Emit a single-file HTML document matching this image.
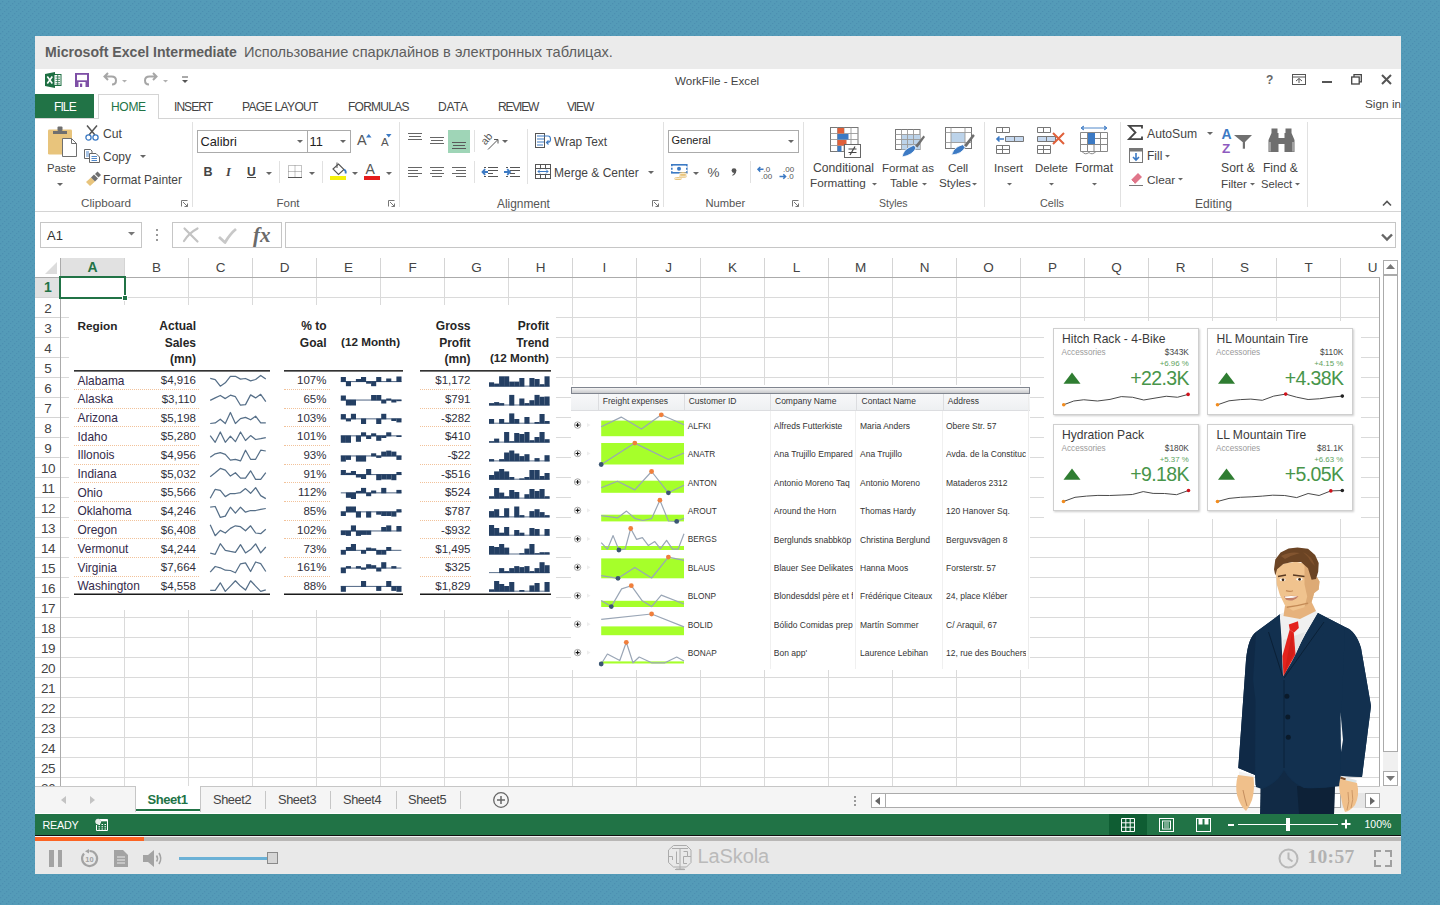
<!DOCTYPE html>
<html><head><meta charset="utf-8">
<style>
*{margin:0;padding:0;box-sizing:border-box}
html,body{width:1440px;height:905px;overflow:hidden}
body{font-family:"Liberation Sans", sans-serif;position:relative;background:#549bb8;}
.a{position:absolute}
.t{position:absolute;white-space:nowrap;line-height:1}
svg.a{overflow:visible}
</style></head><body>

<svg class="a" style="left:0;top:0" width="1440" height="905"><defs><pattern id="bgp" width="6" height="6" patternUnits="userSpaceOnUse"><rect x="4" y="5" width="1.3" height="1.3" fill="#4c8fb1"/><rect x="2" y="1" width="1.3" height="1.3" fill="#4c8fb1"/><rect x="0" y="3" width="1.3" height="1.3" fill="#4c8fb1"/></pattern></defs><rect width="1440" height="905" fill="url(#bgp)"/></svg>
<div class="a" style="left:35px;top:36px;width:1366px;height:838px;background:#fff;"></div>
<div class="a" style="left:35px;top:36px;width:1366px;height:33px;background:#ebebeb;"></div>
<div class="t" style="top:45px;font-size:14.1px;color:#5e5e5e;font-weight:bold;left:45px;">Microsoft Excel Intermediate</div>
<div class="t" style="top:45px;font-size:14.6px;color:#5e5e5e;left:244px;">Использование спарклайнов в электронных таблицах.</div>
<svg class="a" style="left:45px;top:72px;" width="17" height="16" viewBox="0 0 17 16"><path d="M0 2L10 0V16L0 14Z" fill="#1d6f42"/><rect x="9" y="2.5" width="7" height="11" fill="#fff" stroke="#1d6f42" stroke-width="1"/>
<path d="M10.5 5H15M10.5 7.3H15M10.5 9.6H15M10.5 11.9H15M12.7 3V13" stroke="#1d6f42" stroke-width="0.8"/>
<path d="M2.3 4.5L7.3 11.5M7.3 4.5L2.3 11.5" stroke="#fff" stroke-width="1.6"/></svg>
<svg class="a" style="left:75px;top:73px;" width="14" height="14" viewBox="0 0 14 14"><rect x="0" y="0" width="14" height="14" fill="#7e4fa6"/><rect x="2" y="1.8" width="10" height="5.5" fill="#fff"/><rect x="3.5" y="9" width="7" height="5" fill="#fff"/><rect x="5" y="10.5" width="2.2" height="3.5" fill="#7e4fa6"/></svg>
<svg class="a" style="left:103px;top:72px;" width="15" height="14" viewBox="0 0 15 14"><path d="M5 1L1.5 4.5L5 8M2 4.5H8.5Q13 4.5 13 8.5Q13 12.5 9 12.5" fill="none" stroke="#a6a6a6" stroke-width="2"/></svg>
<svg class="a" style="left:121.5px;top:80px;" width="5.0" height="3.5" viewBox="0 0 5.0 3.5"><path d="M0 0H5.0L2.5 2.5Z" fill="#b0b0b0"/></svg>
<svg class="a" style="left:143px;top:72px;" width="15" height="14" viewBox="0 0 15 14"><path d="M10 1L13.5 4.5L10 8M13 4.5H6.5Q2 4.5 2 8.5Q2 12.5 6 12.5" fill="none" stroke="#a6a6a6" stroke-width="2"/></svg>
<svg class="a" style="left:162.5px;top:80px;" width="5.0" height="3.5" viewBox="0 0 5.0 3.5"><path d="M0 0H5.0L2.5 2.5Z" fill="#b0b0b0"/></svg>
<svg class="a" style="left:181px;top:76px;" width="8" height="8" viewBox="0 0 8 8"><path d="M1 1H7" stroke="#555" stroke-width="1"/><path d="M1 4H7L4 7Z" fill="#555"/></svg>
<div class="t" style="top:75px;font-size:11.6px;color:#444;left:675px;">WorkFile - Excel</div>
<div class="t" style="top:74px;font-size:12px;color:#666;font-weight:bold;left:1266px;">?</div>
<svg class="a" style="left:1292px;top:74px;" width="14" height="11" viewBox="0 0 14 11"><rect x="0.5" y="0.5" width="13" height="10" fill="none" stroke="#555"/><path d="M0.5 3H13.5" stroke="#555"/><path d="M4 7L7 4.5L10 7M7 4.5V9" fill="none" stroke="#555"/></svg>
<div class="a" style="left:1322px;top:81px;width:10px;height:2px;background:#555;"></div>
<svg class="a" style="left:1351px;top:74px;" width="11" height="11" viewBox="0 0 11 11"><rect x="0.7" y="3" width="7.5" height="7" fill="#fff" stroke="#444" stroke-width="1.3"/><path d="M3 3V0.7H10.3V7.8H8.2" fill="none" stroke="#444" stroke-width="1.3"/></svg>
<svg class="a" style="left:1381px;top:74px;" width="11" height="11" viewBox="0 0 11 11"><path d="M1 1L10 10M10 1L1 10" stroke="#555" stroke-width="2"/></svg>
<div class="a" style="left:35px;top:94px;width:59px;height:25px;background:#217346;"></div>
<div class="t" style="top:101px;font-size:12px;color:#fff;left:54px;letter-spacing:-0.9px;">FILE</div>
<div class="a" style="left:98px;top:94px;width:61px;height:25px;background:#fff;border:1px solid #d4d4d4;border-bottom:none;"></div>
<div class="t" style="top:101px;font-size:12px;color:#217346;left:111px;letter-spacing:-0.3px;">HOME</div>
<div class="t" style="top:101px;font-size:12px;color:#444;left:174px;letter-spacing:-0.95px;">INSERT</div>
<div class="t" style="top:101px;font-size:12px;color:#444;left:242px;letter-spacing:-0.65px;">PAGE LAYOUT</div>
<div class="t" style="top:101px;font-size:12px;color:#444;left:348px;letter-spacing:-0.75px;">FORMULAS</div>
<div class="t" style="top:101px;font-size:12px;color:#444;left:438px;letter-spacing:-0.1px;">DATA</div>
<div class="t" style="top:101px;font-size:12px;color:#444;left:498px;letter-spacing:-1.2px;">REVIEW</div>
<div class="t" style="top:101px;font-size:12px;color:#444;left:567px;letter-spacing:-1.15px;">VIEW</div>
<div class="t" style="top:99px;font-size:11.8px;color:#444;left:1365px;">Sign in</div>
<div class="a" style="left:35px;top:118px;width:63px;height:1px;background:#d4d4d4;"></div>
<div class="a" style="left:159px;top:118px;width:1242px;height:1px;background:#d4d4d4;"></div>
<div class="a" style="left:35px;top:211px;width:1366px;height:1px;background:#d4d4d4;"></div>
<div class="a" style="left:192px;top:122px;width:1px;height:85px;background:#e1e1e1;"></div>
<div class="a" style="left:399px;top:122px;width:1px;height:85px;background:#e1e1e1;"></div>
<div class="a" style="left:663px;top:122px;width:1px;height:85px;background:#e1e1e1;"></div>
<div class="a" style="left:803px;top:122px;width:1px;height:85px;background:#e1e1e1;"></div>
<div class="a" style="left:984px;top:122px;width:1px;height:85px;background:#e1e1e1;"></div>
<div class="a" style="left:1120px;top:122px;width:1px;height:85px;background:#e1e1e1;"></div>
<div class="a" style="left:1307px;top:122px;width:1px;height:85px;background:#e1e1e1;"></div>
<div class="a" style="left:279px;top:161px;width:1px;height:22px;background:#e1e1e1;"></div>
<div class="a" style="left:322px;top:161px;width:1px;height:22px;background:#e1e1e1;"></div>
<div class="a" style="left:474px;top:130px;width:1px;height:22px;background:#e1e1e1;"></div>
<div class="a" style="left:474px;top:161px;width:1px;height:22px;background:#e1e1e1;"></div>
<div class="a" style="left:527px;top:129px;width:1px;height:55px;background:#e1e1e1;"></div>
<div class="a" style="left:750px;top:161px;width:1px;height:22px;background:#e1e1e1;"></div>
<div class="t" style="top:197px;font-size:11.7px;color:#555;left:81px;">Clipboard</div>
<div class="t" style="top:198px;font-size:11.5px;color:#555;left:276.5px;">Font</div>
<div class="t" style="top:199px;font-size:11.9px;color:#555;left:497px;">Alignment</div>
<div class="t" style="top:198px;font-size:11.2px;color:#555;left:705.5px;">Number</div>
<div class="t" style="top:198px;font-size:10.5px;color:#555;left:879px;">Styles</div>
<div class="t" style="top:198px;font-size:10.8px;color:#555;left:1040px;">Cells</div>
<div class="t" style="top:198px;font-size:12.1px;color:#555;left:1195px;">Editing</div>
<svg class="a" style="left:181px;top:200px;" width="7" height="7" viewBox="0 0 7 7"><path d="M0.5 6.5V0.5H6.5" fill="none" stroke="#777"/><path d="M2 2L6.5 6.5M3.5 6.5H6.5V3.5" fill="none" stroke="#777"/></svg>
<svg class="a" style="left:388px;top:200px;" width="7" height="7" viewBox="0 0 7 7"><path d="M0.5 6.5V0.5H6.5" fill="none" stroke="#777"/><path d="M2 2L6.5 6.5M3.5 6.5H6.5V3.5" fill="none" stroke="#777"/></svg>
<svg class="a" style="left:652px;top:200px;" width="7" height="7" viewBox="0 0 7 7"><path d="M0.5 6.5V0.5H6.5" fill="none" stroke="#777"/><path d="M2 2L6.5 6.5M3.5 6.5H6.5V3.5" fill="none" stroke="#777"/></svg>
<svg class="a" style="left:792px;top:200px;" width="7" height="7" viewBox="0 0 7 7"><path d="M0.5 6.5V0.5H6.5" fill="none" stroke="#777"/><path d="M2 2L6.5 6.5M3.5 6.5H6.5V3.5" fill="none" stroke="#777"/></svg>
<svg class="a" style="left:1382px;top:200px;" width="10" height="6" viewBox="0 0 10 6"><path d="M1 5.5L5 1.5L9 5.5" fill="none" stroke="#555" stroke-width="1.6"/></svg>
<svg class="a" style="left:47px;top:126px;" width="31" height="32" viewBox="0 0 31 32"><rect x="1" y="3.5" width="24" height="25" rx="1.2" fill="#e8c47c"/>
<path d="M6 5H20V8H6Z" fill="#6f6f6f"/><rect x="10.5" y="0.5" width="5" height="4.5" rx="1" fill="#6f6f6f"/>
<path d="M15.5 12.5H24.5L29.5 17.5V30.5H15.5Z" fill="#fff" stroke="#6f6f6f"/><path d="M24.5 12.5V17.5H29.5" fill="none" stroke="#6f6f6f"/></svg>
<div class="t" style="top:163px;font-size:11.3px;color:#444;left:47px;">Paste</div>
<svg class="a" style="left:56.5px;top:183px;" width="6" height="4" viewBox="0 0 6 4"><path d="M0 0H6L3 3Z" fill="#666"/></svg>
<svg class="a" style="left:85px;top:125px;" width="15" height="16" viewBox="0 0 15 16"><path d="M2 0.5L10 10M12 0.5L4 10" stroke="#555" stroke-width="1.5"/><circle cx="3.5" cy="12.5" r="2.6" fill="none" stroke="#3c7ac4" stroke-width="1.3"/><circle cx="10.5" cy="12.5" r="2.6" fill="none" stroke="#3c7ac4" stroke-width="1.3"/></svg>
<div class="t" style="top:128px;font-size:12.2px;color:#444;left:103px;">Cut</div>
<svg class="a" style="left:84px;top:149px;" width="16" height="14" viewBox="0 0 16 14"><path d="M0.5 0.5H6.5L8 2V9.5H0.5Z" fill="#fff" stroke="#666"/><path d="M5.5 4.5H12L15.5 8V13.5H5.5Z" fill="#fff" stroke="#666"/><path d="M2 3H5M2 5H5M2 7H5M7.5 7.5H13M7.5 9.5H13M7.5 11.5H13" stroke="#3c7ac4" stroke-width="0.9"/></svg>
<div class="t" style="top:151px;font-size:12px;color:#444;left:103px;">Copy</div>
<svg class="a" style="left:140px;top:155px;" width="6" height="4" viewBox="0 0 6 4"><path d="M0 0H6L3 3Z" fill="#666"/></svg>
<svg class="a" style="left:85px;top:171px;" width="16" height="16" viewBox="0 0 16 16"><path d="M1 11L6 6.5L10 10.5L5 15Z" fill="#e8c47c"/><path d="M6 6.5L9 3.5L13 7.5L10 10.5Z" fill="#6f6f6f"/><path d="M10 3L12.5 0.5L16 4L13.5 6.5Z" fill="#6f6f6f"/></svg>
<div class="t" style="top:175px;font-size:11.95px;color:#444;left:103px;">Format Painter</div>
<div class="a" style="left:197px;top:130px;width:111px;height:23px;background:#fff;border:1px solid #ababab;"></div>
<div class="a" style="left:307px;top:130px;width:44px;height:23px;background:#fff;border:1px solid #ababab;"></div>
<div class="t" style="top:136px;font-size:12.8px;color:#222;left:200.5px;">Calibri</div>
<div class="t" style="top:136px;font-size:12.8px;color:#222;left:309.5px;">11</div>
<svg class="a" style="left:297px;top:140px;" width="6" height="4" viewBox="0 0 6 4"><path d="M0 0H6L3 3Z" fill="#666"/></svg>
<svg class="a" style="left:340px;top:140px;" width="6" height="4" viewBox="0 0 6 4"><path d="M0 0H6L3 3Z" fill="#666"/></svg>
<div class="t" style="top:133px;font-size:14.5px;color:#555;left:357px;">A</div>
<svg class="a" style="left:366px;top:134px;" width="6" height="4" viewBox="0 0 6 4"><path d="M0 3.5H5.5L2.75 0Z" fill="#3c7ac4"/></svg>
<div class="t" style="top:137px;font-size:11.5px;color:#555;left:381px;">A</div>
<svg class="a" style="left:386px;top:134px;" width="6" height="4" viewBox="0 0 6 4"><path d="M0 0H5.5L2.75 3.5Z" fill="#3c7ac4"/></svg>
<div class="t" style="top:166px;font-size:12.5px;color:#444;font-weight:bold;left:203.5px;">B</div>
<div class="t" style="top:166px;font-size:12.5px;color:#444;font-weight:bold;left:226px;font-family:'Liberation Serif',serif;"><i>I</i></div>
<div class="t" style="top:166px;font-size:12px;color:#444;font-weight:bold;left:247px;">U</div>
<div class="a" style="left:247px;top:176.5px;width:9px;height:1.2px;background:#444;"></div>
<svg class="a" style="left:265.5px;top:171.5px;" width="6" height="4" viewBox="0 0 6 4"><path d="M0 0H6L3 3Z" fill="#666"/></svg>
<svg class="a" style="left:288px;top:165px;" width="14" height="13" viewBox="0 0 14 13"><path d="M0.5 0.5H13.5V12.5H0.5ZM7 0.5V12.5M0.5 6.5H13.5" fill="none" stroke="#888" stroke-dasharray="1 1"/><path d="M0 12.5H14" stroke="#555"/></svg>
<svg class="a" style="left:308.5px;top:171.5px;" width="6" height="4" viewBox="0 0 6 4"><path d="M0 0H6L3 3Z" fill="#666"/></svg>
<svg class="a" style="left:330px;top:162px;" width="17" height="18" viewBox="0 0 17 18"><path d="M3 7L8.5 2L14 7.5L8.5 12.5Z" fill="#fff" stroke="#555" stroke-width="1.1"/><path d="M7 0.5V6" stroke="#555"/><path d="M14 7.5Q16.5 9 15.5 11.5" fill="none" stroke="#3c7ac4" stroke-width="1.8"/><rect x="0" y="14" width="16" height="4" fill="#f5f10a"/></svg>
<svg class="a" style="left:351.5px;top:171.5px;" width="6" height="4" viewBox="0 0 6 4"><path d="M0 0H6L3 3Z" fill="#666"/></svg>
<div class="t" style="top:162px;font-size:14px;color:#555;left:365.5px;">A</div>
<div class="a" style="left:364px;top:176px;width:16px;height:4px;background:#e51c1c;"></div>
<svg class="a" style="left:385.5px;top:171.5px;" width="6" height="4" viewBox="0 0 6 4"><path d="M0 0H6L3 3Z" fill="#666"/></svg>
<div class="a" style="left:408px;top:133px;width:14px;height:1px;background:#666;"></div>
<div class="a" style="left:409px;top:136px;width:12px;height:1px;background:#666;"></div>
<div class="a" style="left:408px;top:139px;width:14px;height:1px;background:#666;"></div>
<div class="a" style="left:430px;top:137px;width:14px;height:1px;background:#666;"></div>
<div class="a" style="left:431px;top:140px;width:12px;height:1px;background:#666;"></div>
<div class="a" style="left:430px;top:143px;width:14px;height:1px;background:#666;"></div>
<div class="a" style="left:448px;top:130px;width:22px;height:23px;background:#9fd5b7;"></div>
<div class="a" style="left:452px;top:142px;width:14px;height:1px;background:#5a5a5a;"></div>
<div class="a" style="left:453px;top:145px;width:12px;height:1px;background:#5a5a5a;"></div>
<div class="a" style="left:452px;top:148px;width:14px;height:1px;background:#5a5a5a;"></div>
<div class="a" style="left:408px;top:167px;width:14px;height:1px;background:#666;"></div>
<div class="a" style="left:430px;top:167px;width:14px;height:1px;background:#666;"></div>
<div class="a" style="left:452px;top:167px;width:14px;height:1px;background:#666;"></div>
<div class="a" style="left:408px;top:170px;width:10px;height:1px;background:#666;"></div>
<div class="a" style="left:432px;top:170px;width:10px;height:1px;background:#666;"></div>
<div class="a" style="left:456px;top:170px;width:10px;height:1px;background:#666;"></div>
<div class="a" style="left:408px;top:173px;width:14px;height:1px;background:#666;"></div>
<div class="a" style="left:430px;top:173px;width:14px;height:1px;background:#666;"></div>
<div class="a" style="left:452px;top:173px;width:14px;height:1px;background:#666;"></div>
<div class="a" style="left:408px;top:176px;width:10px;height:1px;background:#666;"></div>
<div class="a" style="left:432px;top:176px;width:10px;height:1px;background:#666;"></div>
<div class="a" style="left:456px;top:176px;width:10px;height:1px;background:#666;"></div>
<svg class="a" style="left:482px;top:132px;" width="18" height="18" viewBox="0 0 18 18"><text x="0" y="0" font-size="10.5" fill="#555" transform="translate(3.5 13.5) rotate(-50)" font-family="Liberation Sans">ab</text><path d="M6 17.5L15.5 8M12 7.5H16V11.5" fill="none" stroke="#555" stroke-width="1"/></svg>
<svg class="a" style="left:501.5px;top:140px;" width="6" height="4" viewBox="0 0 6 4"><path d="M0 0H6L3 3Z" fill="#666"/></svg>
<svg class="a" style="left:482px;top:166px;" width="18" height="12" viewBox="0 0 18 12"><path d="M2 1.5H4M6 1.5H16M6 4.5H16M6 7.5H11M2 10.5H4M6 10.5H16" stroke="#555" stroke-width="1"/><path d="M0.5 6H6M3.2 3.2L0.5 6L3.2 8.8" fill="none" stroke="#3c7ac4" stroke-width="1.8"/></svg>
<svg class="a" style="left:504px;top:166px;" width="18" height="12" viewBox="0 0 18 12"><path d="M2 1.5H4M6 1.5H16M6 4.5H16M6 7.5H11M2 10.5H4M6 10.5H16" stroke="#555" stroke-width="1"/><path d="M0 6H6M3.2 3.2L6 6L3.2 8.8" fill="none" stroke="#3c7ac4" stroke-width="1.8"/></svg>
<svg class="a" style="left:535px;top:133px;" width="16" height="15" viewBox="0 0 16 15"><rect x="0.5" y="0.5" width="9" height="14" fill="none" stroke="#555"/><path d="M2 3H13M2 6H9M2 9H9M2 12H8" stroke="#3c7ac4" stroke-width="1"/><path d="M13 3Q15.5 3 15.5 6.5Q15.5 9.5 12 9.5M13.5 7.5L11.5 9.5L13.5 11.5" fill="none" stroke="#3c7ac4" stroke-width="1.2"/></svg>
<div class="t" style="top:137px;font-size:11.9px;color:#444;left:554px;">Wrap Text</div>
<svg class="a" style="left:535px;top:164px;" width="16" height="15" viewBox="0 0 16 15"><rect x="0.5" y="0.5" width="15" height="14" fill="none" stroke="#555"/><path d="M0.5 4.5H15.5M0.5 10.5H15.5M5.5 0.5V4.5M10.5 0.5V4.5M5.5 10.5V14.5M10.5 10.5V14.5" stroke="#555"/><path d="M3 7.5H13M5 5.5L3 7.5L5 9.5M11 5.5L13 7.5L11 9.5" fill="none" stroke="#3c7ac4"/></svg>
<div class="t" style="top:167px;font-size:12px;color:#444;left:554px;">Merge &amp; Center</div>
<svg class="a" style="left:648px;top:171px;" width="6" height="4" viewBox="0 0 6 4"><path d="M0 0H6L3 3Z" fill="#666"/></svg>
<div class="a" style="left:668px;top:130px;width:131px;height:23px;background:#fff;border:1px solid #ababab;"></div>
<div class="t" style="top:135px;font-size:11px;color:#222;left:671.5px;">General</div>
<svg class="a" style="left:788px;top:140px;" width="6" height="4" viewBox="0 0 6 4"><path d="M0 0H6L3 3Z" fill="#666"/></svg>
<svg class="a" style="left:671px;top:164px;" width="18" height="17" viewBox="0 0 18 17"><rect x="0.8" y="0.8" width="15" height="8" fill="#fff" stroke="#3c7ac4" stroke-width="1.6"/><path d="M0 3H2.5M14 3H16.5M0 6.5H2.5M14 6.5H16.5" stroke="#fff" stroke-width="1.4"/><circle cx="8" cy="4.8" r="2" fill="#3c7ac4"/><ellipse cx="12" cy="9.5" rx="3.8" ry="1.5" fill="#e8c47c"/><ellipse cx="12" cy="12.3" rx="3.8" ry="1.5" fill="#e8c47c"/><ellipse cx="7" cy="14.5" rx="3.8" ry="1.6" fill="#e8c47c"/><path d="M8.5 9.5H15.5M8.5 12.3H15.5M3.5 14.5H10.5" stroke="#fff" stroke-width="0.6"/></svg>
<svg class="a" style="left:692.5px;top:171.5px;" width="6" height="4" viewBox="0 0 6 4"><path d="M0 0H6L3 3Z" fill="#666"/></svg>
<div class="t" style="top:166px;font-size:13.5px;color:#555;left:707.5px;">%</div>
<svg class="a" style="left:731px;top:168px;" width="6" height="8" viewBox="0 0 6 8"><circle cx="3" cy="2.6" r="2.4" fill="#555"/><path d="M5.2 2.8Q5.2 6.5 1.5 7.8L1.2 7Q3 6 3.2 4.5Z" fill="#555"/></svg>
<svg class="a" style="left:757px;top:165px;" width="16" height="15" viewBox="0 0 16 15"><text x="6.5" y="7" font-size="8" fill="#555" font-family="Liberation Sans">.0</text><text x="4" y="14" font-size="8" fill="#555" font-family="Liberation Sans">.00</text><path d="M1 4.3H6.5M3.3 2L1 4.3L3.3 6.6" fill="none" stroke="#3c7ac4" stroke-width="1.5"/></svg>
<svg class="a" style="left:779px;top:165px;" width="16" height="15" viewBox="0 0 16 15"><text x="4" y="7" font-size="8" fill="#555" font-family="Liberation Sans">.00</text><text x="8" y="14" font-size="8" fill="#555" font-family="Liberation Sans">.0</text><path d="M0.5 11.5H6.5M4.3 9.2L6.6 11.5L4.3 13.8" fill="none" stroke="#3c7ac4" stroke-width="1.5"/></svg>
<svg class="a" style="left:829px;top:126px;" width="33" height="33" viewBox="0 0 33 33"><rect x="1.5" y="1.5" width="27.5" height="24" fill="#fff" stroke="#777"/>
<path d="M8.5 1.5V25.5M15 1.5V25.5M22 1.5V25.5M1.5 7.5H29M1.5 13.5H29M1.5 19.5H29" stroke="#999" stroke-width="0.9"/>
<rect x="8.5" y="2" width="6.5" height="5.5" fill="#e0603a"/><rect x="8.5" y="8" width="11" height="5.5" fill="#3c7ac4"/><rect x="8.5" y="14" width="9" height="5.5" fill="#e0603a"/><rect x="8.5" y="20" width="4" height="5.5" fill="#3c7ac4"/>
<rect x="15.5" y="18.5" width="16" height="13" fill="#fff" stroke="#666"/><path d="M19.5 23H27.5M19.5 26.5H27.5M26 20.5L21 29" stroke="#444" stroke-width="1.2"/></svg>
<div class="t" style="top:162px;font-size:12.2px;color:#444;left:813px;">Conditional</div>
<div class="t" style="top:177px;font-size:11.7px;color:#444;left:810px;">Formatting</div>
<svg class="a" style="left:871.5px;top:183px;" width="5.0" height="3.5" viewBox="0 0 5.0 3.5"><path d="M0 0H5.0L2.5 2.5Z" fill="#666"/></svg>
<svg class="a" style="left:894px;top:128px;" width="32" height="30" viewBox="0 0 32 30"><rect x="1.5" y="1.5" width="24.5" height="20" fill="#fff" stroke="#777"/>
<rect x="7.5" y="7" width="18.5" height="14.5" fill="#bcd3ea"/>
<path d="M7.5 1.5V21.5M13.5 1.5V21.5M19.5 1.5V21.5M1.5 6.5H26M1.5 11.5H26M1.5 16.5H26" stroke="#999" stroke-width="0.9"/>
<path d="M21 18L29.5 7.5L31 9L23.5 19.5Z" fill="#6f6f6f"/><path d="M8 29Q9.5 22 15 19.5L20 17L22 20Q19 27 8 29Z" fill="#3c7ac4" stroke="#fff" stroke-width="0.8"/></svg>
<div class="t" style="top:163px;font-size:11.55px;color:#444;left:882px;">Format as</div>
<div class="t" style="top:177px;font-size:11.7px;color:#444;left:890px;">Table</div>
<svg class="a" style="left:921.5px;top:183px;" width="5.0" height="3.5" viewBox="0 0 5.0 3.5"><path d="M0 0H5.0L2.5 2.5Z" fill="#666"/></svg>
<svg class="a" style="left:944px;top:126px;" width="32" height="31" viewBox="0 0 32 31"><rect x="1.5" y="1.5" width="26" height="21" fill="#fff" stroke="#777"/>
<rect x="7" y="7" width="14" height="9.5" fill="#bcd3ea"/>
<path d="M7 1.5V22.5M21 1.5V22.5M1.5 6.5H27.5M1.5 16.5H27.5" stroke="#999" stroke-width="0.9"/>
<path d="M20 19.5L29 8L30.8 9.8L22.5 21Z" fill="#6f6f6f"/><path d="M7.5 29Q9 23 14 20.5L19 18.5L21 21.5Q18 28 7.5 29Z" fill="#3c7ac4" stroke="#fff" stroke-width="0.8"/></svg>
<div class="t" style="top:162px;font-size:11.7px;color:#444;left:948px;">Cell</div>
<div class="t" style="top:177px;font-size:11.7px;color:#444;left:939px;">Styles</div>
<svg class="a" style="left:971.5px;top:183px;" width="5.0" height="3.5" viewBox="0 0 5.0 3.5"><path d="M0 0H5.0L2.5 2.5Z" fill="#666"/></svg>
<svg class="a" style="left:996px;top:127px;" width="28" height="27" viewBox="0 0 28 27"><path d="M0.5 0.5H13.5V5.5H0.5ZM6.5 0.5V5.5" fill="none" stroke="#777"/>
<path d="M9.5 9.5H27.5V14.5H9.5ZM18.5 9.5V14.5" fill="#c6d9f0" stroke="#777"/>
<path d="M1 12H8M3.5 9.5L1 12L3.5 14.5" fill="none" stroke="#3c7ac4" stroke-width="1.6"/>
<path d="M0.5 18.5H13.5V26.5H0.5ZM0.5 22.5H13.5M6.5 18.5V26.5" fill="none" stroke="#777"/></svg>
<div class="t" style="top:162px;font-size:11.6px;color:#444;left:994px;">Insert</div>
<svg class="a" style="left:1006.5px;top:183px;" width="5.0" height="3.5" viewBox="0 0 5.0 3.5"><path d="M0 0H5.0L2.5 2.5Z" fill="#666"/></svg>
<svg class="a" style="left:1037px;top:127px;" width="31" height="27" viewBox="0 0 31 27"><path d="M0.5 0.5H13.5V5.5H0.5ZM6.5 0.5V5.5" fill="none" stroke="#777"/>
<path d="M0.5 9.5H18.5V14.5H0.5ZM9.5 9.5V14.5" fill="#c6d9f0" stroke="#777"/>
<path d="M16 6L27 17M27 6L16 17" stroke="#e0603a" stroke-width="2"/>
<path d="M0.5 18.5H13.5V26.5H0.5ZM0.5 22.5H13.5M6.5 18.5V26.5" fill="none" stroke="#777"/></svg>
<div class="t" style="top:163px;font-size:11.4px;color:#444;left:1035px;">Delete</div>
<svg class="a" style="left:1048.5px;top:183px;" width="5.0" height="3.5" viewBox="0 0 5.0 3.5"><path d="M0 0H5.0L2.5 2.5Z" fill="#666"/></svg>
<svg class="a" style="left:1080px;top:126px;" width="29" height="30" viewBox="0 0 29 30"><path d="M1 2H27M3 0V4M25 0V4M1 2L4 0M1 2L4 4M27 2L24 0M27 2L24 4" fill="none" stroke="#3c7ac4" stroke-width="0.9"/>
<path d="M0.5 6.5H27.5V25.5H0.5ZM0.5 12.5H27.5M0.5 18.5H27.5M7.5 6.5V25.5M14 6.5V25.5M20.5 6.5V25.5" fill="none" stroke="#888"/>
<rect x="8" y="7" width="7" height="11" fill="#3c7ac4"/><path d="M2 25.5Q5 29.5 9 26.5Q12 29.5 16 25.5" fill="none" stroke="#888"/></svg>
<div class="t" style="top:162px;font-size:12px;color:#444;left:1075px;">Format</div>
<svg class="a" style="left:1091.5px;top:183px;" width="5.0" height="3.5" viewBox="0 0 5.0 3.5"><path d="M0 0H5.0L2.5 2.5Z" fill="#666"/></svg>
<svg class="a" style="left:1128px;top:125px;" width="15" height="15" viewBox="0 0 15 15"><path d="M14 3.5V0.8H1L7.5 7.5L1 14.2H14V11.5" fill="none" stroke="#444" stroke-width="1.8"/></svg>
<div class="t" style="top:128px;font-size:12.2px;color:#444;left:1147px;">AutoSum</div>
<svg class="a" style="left:1206.5px;top:132px;" width="6" height="4" viewBox="0 0 6 4"><path d="M0 0H6L3 3Z" fill="#666"/></svg>
<svg class="a" style="left:1129px;top:148px;" width="14" height="15" viewBox="0 0 14 15"><rect x="0.5" y="0.5" width="13" height="14" fill="#fff" stroke="#777"/><rect x="0.5" y="0.5" width="13" height="3" fill="#777"/><path d="M7 5V12M4 9L7 12L10 9" fill="none" stroke="#3c7ac4" stroke-width="1.6"/></svg>
<div class="t" style="top:150px;font-size:12px;color:#444;left:1147px;">Fill</div>
<svg class="a" style="left:1165.0px;top:155px;" width="5.0" height="3.5" viewBox="0 0 5.0 3.5"><path d="M0 0H5.0L2.5 2.5Z" fill="#666"/></svg>
<svg class="a" style="left:1129px;top:171px;" width="15" height="15" viewBox="0 0 15 15"><path d="M2 9L9 2L13 6L6 13Z" fill="#e0768a"/><path d="M2 9L5.5 12.5" stroke="#fff"/><path d="M0 14.5H14" stroke="#777"/></svg>
<div class="t" style="top:175px;font-size:11.8px;color:#444;left:1147px;">Clear</div>
<svg class="a" style="left:1177.5px;top:178px;" width="5.0" height="3.5" viewBox="0 0 5.0 3.5"><path d="M0 0H5.0L2.5 2.5Z" fill="#666"/></svg>
<svg class="a" style="left:1222px;top:127px;" width="31" height="27" viewBox="0 0 31 27"><text x="-0.5" y="11.5" font-size="14" font-weight="bold" fill="#3c7ac4" font-family="Liberation Sans">A</text>
<text x="0" y="26" font-size="13.5" font-weight="bold" fill="#8e5bbf" font-family="Liberation Sans">Z</text>
<path d="M12 8H30L23 15V22H20.5V15Z" fill="#707070"/><path d="M20.5 15V22H23" fill="none" stroke="#fff" stroke-width="0.6"/></svg>
<svg class="a" style="left:1268px;top:128px;" width="27" height="25" viewBox="0 0 27 25"><path d="M3.5 0.5H9.5V5H10.5V24H0.5V12L3.5 5Z" fill="#6f6f6f"/><path d="M17.5 0.5H23.5V5L26.5 12V24H16.5V5H17.5Z" fill="#6f6f6f"/><rect x="10" y="10" width="7" height="6" fill="#6f6f6f"/>
<path d="M2 14V23.5M25 14V23.5" stroke="#fff" stroke-width="0.7"/></svg>
<div class="t" style="top:162px;font-size:12.2px;color:#444;left:1221px;">Sort &amp;</div>
<div class="t" style="top:178px;font-size:11.7px;color:#444;left:1221px;">Filter</div>
<svg class="a" style="left:1250.0px;top:183px;" width="5.0" height="3.5" viewBox="0 0 5.0 3.5"><path d="M0 0H5.0L2.5 2.5Z" fill="#666"/></svg>
<div class="t" style="top:162px;font-size:12px;color:#444;left:1263px;">Find &amp;</div>
<div class="t" style="top:179px;font-size:11.2px;color:#444;left:1261px;">Select</div>
<svg class="a" style="left:1294.5px;top:183px;" width="5.0" height="3.5" viewBox="0 0 5.0 3.5"><path d="M0 0H5.0L2.5 2.5Z" fill="#666"/></svg>
<div class="a" style="left:40px;top:222px;width:102px;height:26px;background:#fff;border:1px solid #c6c6c6;"></div>
<div class="t" style="top:229px;font-size:13px;color:#333;left:47px;">A1</div>
<svg class="a" style="left:127.5px;top:232px;" width="7.0" height="4.5" viewBox="0 0 7.0 4.5"><path d="M0 0H7.0L3.5 3.5Z" fill="#777"/></svg>
<div class="a" style="left:156px;top:229px;width:2px;height:2px;background:#999;"></div>
<div class="a" style="left:156px;top:234px;width:2px;height:2px;background:#999;"></div>
<div class="a" style="left:156px;top:239px;width:2px;height:2px;background:#999;"></div>
<div class="a" style="left:172px;top:222px;width:110px;height:26px;background:#fff;border:1px solid #c6c6c6;"></div>
<svg class="a" style="left:182px;top:227px;" width="18" height="16" viewBox="0 0 18 16"><path d="M2 14Q7 6 15.5 1.5M2.5 1.5Q9 8 15.5 14.5" fill="none" stroke="#c3c3c3" stroke-width="2.2" stroke-linecap="round"/></svg>
<svg class="a" style="left:218px;top:228px;" width="19" height="16" viewBox="0 0 19 16"><path d="M1 9L7 14.5Q12 6 18 1" fill="none" stroke="#c8c8c8" stroke-width="2.8" stroke-linejoin="round"/></svg>
<div class="t" style="top:225px;font-size:21px;color:#6a6a6a;font-weight:bold;left:253px;font-family:'Liberation Serif',serif;font-style:italic;">fx</div>
<div class="a" style="left:285px;top:222px;width:1111px;height:26px;background:#fff;border:1px solid #c6c6c6;"></div>
<svg class="a" style="left:1381px;top:233px;" width="12" height="8" viewBox="0 0 12 8"><path d="M1 1.5L6 6.5L11 1.5" fill="none" stroke="#666" stroke-width="2.4"/></svg>
<div class="a" style="left:35px;top:249px;width:1366px;height:537px;background:#fff;"></div>
<div class="a" style="left:61px;top:258px;width:64px;height:19px;background:#e1e1e1;"></div>
<div class="a" style="left:35px;top:277px;width:25px;height:21px;background:#e1e1e1;"></div>
<svg class="a" style="left:45px;top:262px;" width="12" height="12" viewBox="0 0 12 12"><path d="M12 0V12H0Z" fill="#dcdcdc"/></svg>
<div class="a" style="left:124px;top:258px;width:1px;height:19px;background:#d4d4d4;"></div>
<div class="a" style="left:188px;top:258px;width:1px;height:19px;background:#d4d4d4;"></div>
<div class="a" style="left:252px;top:258px;width:1px;height:19px;background:#d4d4d4;"></div>
<div class="a" style="left:316px;top:258px;width:1px;height:19px;background:#d4d4d4;"></div>
<div class="a" style="left:380px;top:258px;width:1px;height:19px;background:#d4d4d4;"></div>
<div class="a" style="left:444px;top:258px;width:1px;height:19px;background:#d4d4d4;"></div>
<div class="a" style="left:508px;top:258px;width:1px;height:19px;background:#d4d4d4;"></div>
<div class="a" style="left:572px;top:258px;width:1px;height:19px;background:#d4d4d4;"></div>
<div class="a" style="left:636px;top:258px;width:1px;height:19px;background:#d4d4d4;"></div>
<div class="a" style="left:700px;top:258px;width:1px;height:19px;background:#d4d4d4;"></div>
<div class="a" style="left:764px;top:258px;width:1px;height:19px;background:#d4d4d4;"></div>
<div class="a" style="left:828px;top:258px;width:1px;height:19px;background:#d4d4d4;"></div>
<div class="a" style="left:892px;top:258px;width:1px;height:19px;background:#d4d4d4;"></div>
<div class="a" style="left:956px;top:258px;width:1px;height:19px;background:#d4d4d4;"></div>
<div class="a" style="left:1020px;top:258px;width:1px;height:19px;background:#d4d4d4;"></div>
<div class="a" style="left:1084px;top:258px;width:1px;height:19px;background:#d4d4d4;"></div>
<div class="a" style="left:1148px;top:258px;width:1px;height:19px;background:#d4d4d4;"></div>
<div class="a" style="left:1212px;top:258px;width:1px;height:19px;background:#d4d4d4;"></div>
<div class="a" style="left:1276px;top:258px;width:1px;height:19px;background:#d4d4d4;"></div>
<div class="a" style="left:1340px;top:258px;width:1px;height:19px;background:#d4d4d4;"></div>
<div class="a" style="left:60px;top:258px;width:1px;height:528px;background:#ababab;"></div>
<div class="a" style="left:35px;top:277px;width:1345px;height:1px;background:#ababab;"></div>
<div class="t" style="top:260px;font-size:14px;color:#217346;font-weight:bold;left:92.5px;transform:translateX(-50%);">A</div>
<div class="t" style="top:261px;font-size:13.5px;color:#444;left:156.5px;transform:translateX(-50%);">B</div>
<div class="t" style="top:261px;font-size:13.5px;color:#444;left:220.5px;transform:translateX(-50%);">C</div>
<div class="t" style="top:261px;font-size:13.5px;color:#444;left:284.5px;transform:translateX(-50%);">D</div>
<div class="t" style="top:261px;font-size:13.5px;color:#444;left:348.5px;transform:translateX(-50%);">E</div>
<div class="t" style="top:261px;font-size:13.5px;color:#444;left:412.5px;transform:translateX(-50%);">F</div>
<div class="t" style="top:261px;font-size:13.5px;color:#444;left:476.5px;transform:translateX(-50%);">G</div>
<div class="t" style="top:261px;font-size:13.5px;color:#444;left:540.5px;transform:translateX(-50%);">H</div>
<div class="t" style="top:261px;font-size:13.5px;color:#444;left:604.5px;transform:translateX(-50%);">I</div>
<div class="t" style="top:261px;font-size:13.5px;color:#444;left:668.5px;transform:translateX(-50%);">J</div>
<div class="t" style="top:261px;font-size:13.5px;color:#444;left:732.5px;transform:translateX(-50%);">K</div>
<div class="t" style="top:261px;font-size:13.5px;color:#444;left:796.5px;transform:translateX(-50%);">L</div>
<div class="t" style="top:261px;font-size:13.5px;color:#444;left:860.5px;transform:translateX(-50%);">M</div>
<div class="t" style="top:261px;font-size:13.5px;color:#444;left:924.5px;transform:translateX(-50%);">N</div>
<div class="t" style="top:261px;font-size:13.5px;color:#444;left:988.5px;transform:translateX(-50%);">O</div>
<div class="t" style="top:261px;font-size:13.5px;color:#444;left:1052.5px;transform:translateX(-50%);">P</div>
<div class="t" style="top:261px;font-size:13.5px;color:#444;left:1116.5px;transform:translateX(-50%);">Q</div>
<div class="t" style="top:261px;font-size:13.5px;color:#444;left:1180.5px;transform:translateX(-50%);">R</div>
<div class="t" style="top:261px;font-size:13.5px;color:#444;left:1244.5px;transform:translateX(-50%);">S</div>
<div class="t" style="top:261px;font-size:13.5px;color:#444;left:1308.5px;transform:translateX(-50%);">T</div>
<div class="t" style="top:261px;font-size:13.5px;color:#444;left:1372.5px;transform:translateX(-50%);">U</div>
<div class="a" style="left:35px;top:297px;width:25px;height:1px;background:#d4d4d4;"></div>
<div class="a" style="left:61px;top:297px;width:1318px;height:1px;background:#dadada;"></div>
<div class="t" style="top:280px;font-size:14px;color:#217346;font-weight:bold;left:48px;transform:translateX(-50%);">1</div>
<div class="a" style="left:35px;top:317px;width:25px;height:1px;background:#d4d4d4;"></div>
<div class="a" style="left:61px;top:317px;width:1318px;height:1px;background:#dadada;"></div>
<div class="t" style="top:302px;font-size:13.5px;color:#444;left:48px;transform:translateX(-50%);">2</div>
<div class="a" style="left:35px;top:337px;width:25px;height:1px;background:#d4d4d4;"></div>
<div class="a" style="left:61px;top:337px;width:1318px;height:1px;background:#dadada;"></div>
<div class="t" style="top:322px;font-size:13.5px;color:#444;left:48px;transform:translateX(-50%);">3</div>
<div class="a" style="left:35px;top:357px;width:25px;height:1px;background:#d4d4d4;"></div>
<div class="a" style="left:61px;top:357px;width:1318px;height:1px;background:#dadada;"></div>
<div class="t" style="top:342px;font-size:13.5px;color:#444;left:48px;transform:translateX(-50%);">4</div>
<div class="a" style="left:35px;top:377px;width:25px;height:1px;background:#d4d4d4;"></div>
<div class="a" style="left:61px;top:377px;width:1318px;height:1px;background:#dadada;"></div>
<div class="t" style="top:362px;font-size:13.5px;color:#444;left:48px;transform:translateX(-50%);">5</div>
<div class="a" style="left:35px;top:397px;width:25px;height:1px;background:#d4d4d4;"></div>
<div class="a" style="left:61px;top:397px;width:1318px;height:1px;background:#dadada;"></div>
<div class="t" style="top:382px;font-size:13.5px;color:#444;left:48px;transform:translateX(-50%);">6</div>
<div class="a" style="left:35px;top:417px;width:25px;height:1px;background:#d4d4d4;"></div>
<div class="a" style="left:61px;top:417px;width:1318px;height:1px;background:#dadada;"></div>
<div class="t" style="top:402px;font-size:13.5px;color:#444;left:48px;transform:translateX(-50%);">7</div>
<div class="a" style="left:35px;top:437px;width:25px;height:1px;background:#d4d4d4;"></div>
<div class="a" style="left:61px;top:437px;width:1318px;height:1px;background:#dadada;"></div>
<div class="t" style="top:422px;font-size:13.5px;color:#444;left:48px;transform:translateX(-50%);">8</div>
<div class="a" style="left:35px;top:457px;width:25px;height:1px;background:#d4d4d4;"></div>
<div class="a" style="left:61px;top:457px;width:1318px;height:1px;background:#dadada;"></div>
<div class="t" style="top:442px;font-size:13.5px;color:#444;left:48px;transform:translateX(-50%);">9</div>
<div class="a" style="left:35px;top:477px;width:25px;height:1px;background:#d4d4d4;"></div>
<div class="a" style="left:61px;top:477px;width:1318px;height:1px;background:#dadada;"></div>
<div class="t" style="top:462px;font-size:13.5px;color:#444;left:48px;transform:translateX(-50%);letter-spacing:-0.6px;">10</div>
<div class="a" style="left:35px;top:497px;width:25px;height:1px;background:#d4d4d4;"></div>
<div class="a" style="left:61px;top:497px;width:1318px;height:1px;background:#dadada;"></div>
<div class="t" style="top:482px;font-size:13.5px;color:#444;left:48px;transform:translateX(-50%);letter-spacing:-0.6px;">11</div>
<div class="a" style="left:35px;top:517px;width:25px;height:1px;background:#d4d4d4;"></div>
<div class="a" style="left:61px;top:517px;width:1318px;height:1px;background:#dadada;"></div>
<div class="t" style="top:502px;font-size:13.5px;color:#444;left:48px;transform:translateX(-50%);letter-spacing:-0.6px;">12</div>
<div class="a" style="left:35px;top:537px;width:25px;height:1px;background:#d4d4d4;"></div>
<div class="a" style="left:61px;top:537px;width:1318px;height:1px;background:#dadada;"></div>
<div class="t" style="top:522px;font-size:13.5px;color:#444;left:48px;transform:translateX(-50%);letter-spacing:-0.6px;">13</div>
<div class="a" style="left:35px;top:557px;width:25px;height:1px;background:#d4d4d4;"></div>
<div class="a" style="left:61px;top:557px;width:1318px;height:1px;background:#dadada;"></div>
<div class="t" style="top:542px;font-size:13.5px;color:#444;left:48px;transform:translateX(-50%);letter-spacing:-0.6px;">14</div>
<div class="a" style="left:35px;top:577px;width:25px;height:1px;background:#d4d4d4;"></div>
<div class="a" style="left:61px;top:577px;width:1318px;height:1px;background:#dadada;"></div>
<div class="t" style="top:562px;font-size:13.5px;color:#444;left:48px;transform:translateX(-50%);letter-spacing:-0.6px;">15</div>
<div class="a" style="left:35px;top:597px;width:25px;height:1px;background:#d4d4d4;"></div>
<div class="a" style="left:61px;top:597px;width:1318px;height:1px;background:#dadada;"></div>
<div class="t" style="top:582px;font-size:13.5px;color:#444;left:48px;transform:translateX(-50%);letter-spacing:-0.6px;">16</div>
<div class="a" style="left:35px;top:617px;width:25px;height:1px;background:#d4d4d4;"></div>
<div class="a" style="left:61px;top:617px;width:1318px;height:1px;background:#dadada;"></div>
<div class="t" style="top:602px;font-size:13.5px;color:#444;left:48px;transform:translateX(-50%);letter-spacing:-0.6px;">17</div>
<div class="a" style="left:35px;top:637px;width:25px;height:1px;background:#d4d4d4;"></div>
<div class="a" style="left:61px;top:637px;width:1318px;height:1px;background:#dadada;"></div>
<div class="t" style="top:622px;font-size:13.5px;color:#444;left:48px;transform:translateX(-50%);letter-spacing:-0.6px;">18</div>
<div class="a" style="left:35px;top:657px;width:25px;height:1px;background:#d4d4d4;"></div>
<div class="a" style="left:61px;top:657px;width:1318px;height:1px;background:#dadada;"></div>
<div class="t" style="top:642px;font-size:13.5px;color:#444;left:48px;transform:translateX(-50%);letter-spacing:-0.6px;">19</div>
<div class="a" style="left:35px;top:677px;width:25px;height:1px;background:#d4d4d4;"></div>
<div class="a" style="left:61px;top:677px;width:1318px;height:1px;background:#dadada;"></div>
<div class="t" style="top:662px;font-size:13.5px;color:#444;left:48px;transform:translateX(-50%);letter-spacing:-0.6px;">20</div>
<div class="a" style="left:35px;top:697px;width:25px;height:1px;background:#d4d4d4;"></div>
<div class="a" style="left:61px;top:697px;width:1318px;height:1px;background:#dadada;"></div>
<div class="t" style="top:682px;font-size:13.5px;color:#444;left:48px;transform:translateX(-50%);letter-spacing:-0.6px;">21</div>
<div class="a" style="left:35px;top:717px;width:25px;height:1px;background:#d4d4d4;"></div>
<div class="a" style="left:61px;top:717px;width:1318px;height:1px;background:#dadada;"></div>
<div class="t" style="top:702px;font-size:13.5px;color:#444;left:48px;transform:translateX(-50%);letter-spacing:-0.6px;">22</div>
<div class="a" style="left:35px;top:737px;width:25px;height:1px;background:#d4d4d4;"></div>
<div class="a" style="left:61px;top:737px;width:1318px;height:1px;background:#dadada;"></div>
<div class="t" style="top:722px;font-size:13.5px;color:#444;left:48px;transform:translateX(-50%);letter-spacing:-0.6px;">23</div>
<div class="a" style="left:35px;top:757px;width:25px;height:1px;background:#d4d4d4;"></div>
<div class="a" style="left:61px;top:757px;width:1318px;height:1px;background:#dadada;"></div>
<div class="t" style="top:742px;font-size:13.5px;color:#444;left:48px;transform:translateX(-50%);letter-spacing:-0.6px;">24</div>
<div class="a" style="left:35px;top:777px;width:25px;height:1px;background:#d4d4d4;"></div>
<div class="a" style="left:61px;top:777px;width:1318px;height:1px;background:#dadada;"></div>
<div class="t" style="top:762px;font-size:13.5px;color:#444;left:48px;transform:translateX(-50%);letter-spacing:-0.6px;">25</div>
<div class="a" style="left:35px;top:797px;width:25px;height:1px;background:#d4d4d4;"></div>
<div class="a" style="left:61px;top:797px;width:1318px;height:1px;background:#dadada;"></div>
<div class="t" style="top:782px;font-size:13.5px;color:#444;left:48px;transform:translateX(-50%);letter-spacing:-0.6px;">26</div>
<div class="a" style="left:124px;top:278px;width:1px;height:508px;background:#dadada;"></div>
<div class="a" style="left:188px;top:278px;width:1px;height:508px;background:#dadada;"></div>
<div class="a" style="left:252px;top:278px;width:1px;height:508px;background:#dadada;"></div>
<div class="a" style="left:316px;top:278px;width:1px;height:508px;background:#dadada;"></div>
<div class="a" style="left:380px;top:278px;width:1px;height:508px;background:#dadada;"></div>
<div class="a" style="left:444px;top:278px;width:1px;height:508px;background:#dadada;"></div>
<div class="a" style="left:508px;top:278px;width:1px;height:508px;background:#dadada;"></div>
<div class="a" style="left:572px;top:278px;width:1px;height:508px;background:#dadada;"></div>
<div class="a" style="left:636px;top:278px;width:1px;height:508px;background:#dadada;"></div>
<div class="a" style="left:700px;top:278px;width:1px;height:508px;background:#dadada;"></div>
<div class="a" style="left:764px;top:278px;width:1px;height:508px;background:#dadada;"></div>
<div class="a" style="left:828px;top:278px;width:1px;height:508px;background:#dadada;"></div>
<div class="a" style="left:892px;top:278px;width:1px;height:508px;background:#dadada;"></div>
<div class="a" style="left:956px;top:278px;width:1px;height:508px;background:#dadada;"></div>
<div class="a" style="left:1020px;top:278px;width:1px;height:508px;background:#dadada;"></div>
<div class="a" style="left:1084px;top:278px;width:1px;height:508px;background:#dadada;"></div>
<div class="a" style="left:1148px;top:278px;width:1px;height:508px;background:#dadada;"></div>
<div class="a" style="left:1212px;top:278px;width:1px;height:508px;background:#dadada;"></div>
<div class="a" style="left:1276px;top:278px;width:1px;height:508px;background:#dadada;"></div>
<div class="a" style="left:1340px;top:278px;width:1px;height:508px;background:#dadada;"></div>
<div class="a" style="left:1379px;top:277px;width:1px;height:509px;background:#ababab;"></div>
<div class="a" style="left:59px;top:276px;width:67px;height:23px;background:transparent;border:2px solid #217346;"></div>
<div class="a" style="left:121.5px;top:294.5px;width:6px;height:6px;background:#217346;border:1px solid #fff;"></div>
<div class="a" style="left:1381px;top:249px;width:20px;height:537px;background:#fff;"></div>
<div class="a" style="left:1383px;top:260px;width:15px;height:15px;background:#fff;border:1px solid #ababab;"></div>
<svg class="a" style="left:1386px;top:264px;" width="9" height="5" viewBox="0 0 9 5"><path d="M0 5H9L4.5 0Z" fill="#777"/></svg>
<div class="a" style="left:1383px;top:275px;width:15px;height:477px;background:#fff;border:1px solid #ababab;"></div>
<div class="a" style="left:1383px;top:752px;width:15px;height:20px;background:#f0f0f0;"></div>
<div class="a" style="left:1383px;top:771px;width:15px;height:15px;background:#fff;border:1px solid #ababab;"></div>
<svg class="a" style="left:1386px;top:776px;" width="9" height="5" viewBox="0 0 9 5"><path d="M0 0H9L4.5 5Z" fill="#777"/></svg>
<div class="a" style="left:69px;top:305px;width:487px;height:305px;background:#fff;"></div>
<div class="t" style="top:321px;font-size:11.8px;color:#262626;font-weight:bold;left:77.5px;">Region</div>
<div class="t" style="top:320px;font-size:12px;color:#262626;font-weight:bold;right:1244px;">Actual</div>
<div class="t" style="top:337px;font-size:12px;color:#262626;font-weight:bold;right:1244px;">Sales</div>
<div class="t" style="top:353px;font-size:12px;color:#262626;font-weight:bold;right:1244px;">(mn)</div>
<div class="t" style="top:320px;font-size:12px;color:#262626;font-weight:bold;right:1113.5px;">% to</div>
<div class="t" style="top:337px;font-size:12px;color:#262626;font-weight:bold;right:1113.5px;">Goal</div>
<div class="t" style="top:336px;font-size:11.7px;color:#262626;font-weight:bold;left:341px;">(12 Month)</div>
<div class="t" style="top:320px;font-size:12px;color:#262626;font-weight:bold;right:969.5px;">Gross</div>
<div class="t" style="top:337px;font-size:12px;color:#262626;font-weight:bold;right:969.5px;">Profit</div>
<div class="t" style="top:353px;font-size:12px;color:#262626;font-weight:bold;right:969.5px;">(mn)</div>
<div class="t" style="top:320px;font-size:12px;color:#262626;font-weight:bold;right:891px;">Profit</div>
<div class="t" style="top:337px;font-size:12px;color:#262626;font-weight:bold;right:891px;">Trend</div>
<div class="t" style="top:352px;font-size:11.7px;color:#262626;font-weight:bold;right:891px;">(12 Month)</div>
<div class="a" style="left:74px;top:370px;width:196px;height:1px;background:#333;"></div>
<div class="a" style="left:74px;top:371px;width:196px;height:1px;background:#777;"></div>
<div class="a" style="left:74px;top:594px;width:196px;height:1px;background:#1a1a1a;"></div>
<div class="a" style="left:74px;top:593px;width:196px;height:1px;background:#8a8a8a;"></div>
<div class="a" style="left:284px;top:370px;width:119px;height:1px;background:#333;"></div>
<div class="a" style="left:284px;top:371px;width:119px;height:1px;background:#777;"></div>
<div class="a" style="left:284px;top:594px;width:119px;height:1px;background:#1a1a1a;"></div>
<div class="a" style="left:284px;top:593px;width:119px;height:1px;background:#8a8a8a;"></div>
<div class="a" style="left:420px;top:370px;width:131px;height:1px;background:#333;"></div>
<div class="a" style="left:420px;top:371px;width:131px;height:1px;background:#777;"></div>
<div class="a" style="left:420px;top:594px;width:131px;height:1px;background:#1a1a1a;"></div>
<div class="a" style="left:420px;top:593px;width:131px;height:1px;background:#8a8a8a;"></div>
<div class="a" style="left:74px;top:388.8px;width:125px;height:1px;background:transparent;border-top:1px dotted #f2c29a;"></div>
<div class="a" style="left:284px;top:388.8px;width:46px;height:1px;background:transparent;border-top:1px dotted #f2c29a;"></div>
<div class="a" style="left:420px;top:388.8px;width:51px;height:1px;background:transparent;border-top:1px dotted #f2c29a;"></div>
<div class="t" style="top:376px;font-size:11.9px;color:#33294a;left:77.5px;">Alabama</div>
<div class="t" style="top:375px;font-size:11.5px;color:#2e2e3a;right:1244px;">$4,916</div>
<div class="t" style="top:375px;font-size:11.5px;color:#2e2e3a;right:1113.5px;">107%</div>
<div class="t" style="top:375px;font-size:11.5px;color:#2e2e3a;right:969.5px;">$1,172</div>
<div class="a" style="left:74px;top:407.5px;width:125px;height:1px;background:transparent;border-top:1px dotted #f2c29a;"></div>
<div class="a" style="left:284px;top:407.5px;width:46px;height:1px;background:transparent;border-top:1px dotted #f2c29a;"></div>
<div class="a" style="left:420px;top:407.5px;width:51px;height:1px;background:transparent;border-top:1px dotted #f2c29a;"></div>
<div class="t" style="top:394px;font-size:11.9px;color:#33294a;left:77.5px;">Alaska</div>
<div class="t" style="top:394px;font-size:11.5px;color:#2e2e3a;right:1244px;">$3,110</div>
<div class="t" style="top:394px;font-size:11.5px;color:#2e2e3a;right:1113.5px;">65%</div>
<div class="t" style="top:394px;font-size:11.5px;color:#2e2e3a;right:969.5px;">$791</div>
<div class="a" style="left:74px;top:426.2px;width:125px;height:1px;background:transparent;border-top:1px dotted #f2c29a;"></div>
<div class="a" style="left:284px;top:426.2px;width:46px;height:1px;background:transparent;border-top:1px dotted #f2c29a;"></div>
<div class="a" style="left:420px;top:426.2px;width:51px;height:1px;background:transparent;border-top:1px dotted #f2c29a;"></div>
<div class="t" style="top:413px;font-size:11.9px;color:#33294a;left:77.5px;">Arizona</div>
<div class="t" style="top:413px;font-size:11.5px;color:#2e2e3a;right:1244px;">$5,198</div>
<div class="t" style="top:413px;font-size:11.5px;color:#2e2e3a;right:1113.5px;">103%</div>
<div class="t" style="top:413px;font-size:11.5px;color:#2e2e3a;right:969.5px;">-$282</div>
<div class="a" style="left:74px;top:444.90000000000003px;width:125px;height:1px;background:transparent;border-top:1px dotted #f2c29a;"></div>
<div class="a" style="left:284px;top:444.90000000000003px;width:46px;height:1px;background:transparent;border-top:1px dotted #f2c29a;"></div>
<div class="a" style="left:420px;top:444.90000000000003px;width:51px;height:1px;background:transparent;border-top:1px dotted #f2c29a;"></div>
<div class="t" style="top:432px;font-size:11.9px;color:#33294a;left:77.5px;">Idaho</div>
<div class="t" style="top:431px;font-size:11.5px;color:#2e2e3a;right:1244px;">$5,280</div>
<div class="t" style="top:431px;font-size:11.5px;color:#2e2e3a;right:1113.5px;">101%</div>
<div class="t" style="top:431px;font-size:11.5px;color:#2e2e3a;right:969.5px;">$410</div>
<div class="a" style="left:74px;top:463.6px;width:125px;height:1px;background:transparent;border-top:1px dotted #f2c29a;"></div>
<div class="a" style="left:284px;top:463.6px;width:46px;height:1px;background:transparent;border-top:1px dotted #f2c29a;"></div>
<div class="a" style="left:420px;top:463.6px;width:51px;height:1px;background:transparent;border-top:1px dotted #f2c29a;"></div>
<div class="t" style="top:450px;font-size:11.9px;color:#33294a;left:77.5px;">Illonois</div>
<div class="t" style="top:450px;font-size:11.5px;color:#2e2e3a;right:1244px;">$4,956</div>
<div class="t" style="top:450px;font-size:11.5px;color:#2e2e3a;right:1113.5px;">93%</div>
<div class="t" style="top:450px;font-size:11.5px;color:#2e2e3a;right:969.5px;">-$22</div>
<div class="a" style="left:74px;top:482.3px;width:125px;height:1px;background:transparent;border-top:1px dotted #f2c29a;"></div>
<div class="a" style="left:284px;top:482.3px;width:46px;height:1px;background:transparent;border-top:1px dotted #f2c29a;"></div>
<div class="a" style="left:420px;top:482.3px;width:51px;height:1px;background:transparent;border-top:1px dotted #f2c29a;"></div>
<div class="t" style="top:469px;font-size:11.9px;color:#33294a;left:77.5px;">Indiana</div>
<div class="t" style="top:469px;font-size:11.5px;color:#2e2e3a;right:1244px;">$5,032</div>
<div class="t" style="top:469px;font-size:11.5px;color:#2e2e3a;right:1113.5px;">91%</div>
<div class="t" style="top:469px;font-size:11.5px;color:#2e2e3a;right:969.5px;">-$516</div>
<div class="a" style="left:74px;top:501.0px;width:125px;height:1px;background:transparent;border-top:1px dotted #f2c29a;"></div>
<div class="a" style="left:284px;top:501.0px;width:46px;height:1px;background:transparent;border-top:1px dotted #f2c29a;"></div>
<div class="a" style="left:420px;top:501.0px;width:51px;height:1px;background:transparent;border-top:1px dotted #f2c29a;"></div>
<div class="t" style="top:488px;font-size:11.9px;color:#33294a;left:77.5px;">Ohio</div>
<div class="t" style="top:487px;font-size:11.5px;color:#2e2e3a;right:1244px;">$5,566</div>
<div class="t" style="top:487px;font-size:11.5px;color:#2e2e3a;right:1113.5px;">112%</div>
<div class="t" style="top:487px;font-size:11.5px;color:#2e2e3a;right:969.5px;">$524</div>
<div class="a" style="left:74px;top:519.6999999999999px;width:125px;height:1px;background:transparent;border-top:1px dotted #f2c29a;"></div>
<div class="a" style="left:284px;top:519.6999999999999px;width:46px;height:1px;background:transparent;border-top:1px dotted #f2c29a;"></div>
<div class="a" style="left:420px;top:519.6999999999999px;width:51px;height:1px;background:transparent;border-top:1px dotted #f2c29a;"></div>
<div class="t" style="top:506px;font-size:11.9px;color:#33294a;left:77.5px;">Oklahoma</div>
<div class="t" style="top:506px;font-size:11.5px;color:#2e2e3a;right:1244px;">$4,246</div>
<div class="t" style="top:506px;font-size:11.5px;color:#2e2e3a;right:1113.5px;">85%</div>
<div class="t" style="top:506px;font-size:11.5px;color:#2e2e3a;right:969.5px;">$787</div>
<div class="a" style="left:74px;top:538.4px;width:125px;height:1px;background:transparent;border-top:1px dotted #f2c29a;"></div>
<div class="a" style="left:284px;top:538.4px;width:46px;height:1px;background:transparent;border-top:1px dotted #f2c29a;"></div>
<div class="a" style="left:420px;top:538.4px;width:51px;height:1px;background:transparent;border-top:1px dotted #f2c29a;"></div>
<div class="t" style="top:525px;font-size:11.9px;color:#33294a;left:77.5px;">Oregon</div>
<div class="t" style="top:525px;font-size:11.5px;color:#2e2e3a;right:1244px;">$6,408</div>
<div class="t" style="top:525px;font-size:11.5px;color:#2e2e3a;right:1113.5px;">102%</div>
<div class="t" style="top:525px;font-size:11.5px;color:#2e2e3a;right:969.5px;">-$932</div>
<div class="a" style="left:74px;top:557.0999999999999px;width:125px;height:1px;background:transparent;border-top:1px dotted #f2c29a;"></div>
<div class="a" style="left:284px;top:557.0999999999999px;width:46px;height:1px;background:transparent;border-top:1px dotted #f2c29a;"></div>
<div class="a" style="left:420px;top:557.0999999999999px;width:51px;height:1px;background:transparent;border-top:1px dotted #f2c29a;"></div>
<div class="t" style="top:544px;font-size:11.9px;color:#33294a;left:77.5px;">Vermonut</div>
<div class="t" style="top:544px;font-size:11.5px;color:#2e2e3a;right:1244px;">$4,244</div>
<div class="t" style="top:544px;font-size:11.5px;color:#2e2e3a;right:1113.5px;">73%</div>
<div class="t" style="top:544px;font-size:11.5px;color:#2e2e3a;right:969.5px;">$1,495</div>
<div class="a" style="left:74px;top:575.8px;width:125px;height:1px;background:transparent;border-top:1px dotted #f2c29a;"></div>
<div class="a" style="left:284px;top:575.8px;width:46px;height:1px;background:transparent;border-top:1px dotted #f2c29a;"></div>
<div class="a" style="left:420px;top:575.8px;width:51px;height:1px;background:transparent;border-top:1px dotted #f2c29a;"></div>
<div class="t" style="top:563px;font-size:11.9px;color:#33294a;left:77.5px;">Virginia</div>
<div class="t" style="top:562px;font-size:11.5px;color:#2e2e3a;right:1244px;">$7,664</div>
<div class="t" style="top:562px;font-size:11.5px;color:#2e2e3a;right:1113.5px;">161%</div>
<div class="t" style="top:562px;font-size:11.5px;color:#2e2e3a;right:969.5px;">$325</div>
<div class="t" style="top:581px;font-size:11.9px;color:#33294a;left:77.5px;">Washington</div>
<div class="t" style="top:581px;font-size:11.5px;color:#2e2e3a;right:1244px;">$4,558</div>
<div class="t" style="top:581px;font-size:11.5px;color:#2e2e3a;right:1113.5px;">88%</div>
<div class="t" style="top:581px;font-size:11.5px;color:#2e2e3a;right:969.5px;">$1,829</div>
<svg class="a" style="left:0;top:0" width="1440" height="905"><polyline points="210.2,378.3 215.2,379.7 220.3,386.2 225.3,382.8 230.4,376.3 235.4,376.3 240.5,379.1 245.5,378.5 250.6,380.9 255.6,379.5 260.7,375.5 265.8,379.1" fill="none" stroke="#566f88" stroke-width="1.25" stroke-linejoin="round"/><polyline points="210.2,400.4 215.2,397.9 220.3,395.5 225.3,398.6 230.4,395.2 235.4,396.7 240.5,405.2 245.5,404.6 250.6,394.9 255.6,397.9 260.7,394.3 265.8,401.6" fill="none" stroke="#566f88" stroke-width="1.25" stroke-linejoin="round"/><polyline points="210.2,423.5 215.2,422.9 220.3,419.2 225.3,423.5 230.4,412.5 235.4,423.5 240.5,418.6 245.5,417.4 250.6,419.8 255.6,416.2 260.7,422.9 265.8,422.9" fill="none" stroke="#566f88" stroke-width="1.25" stroke-linejoin="round"/><polyline points="210.2,435.6 215.2,442.3 220.3,432.0 225.3,442.3 230.4,436.2 235.4,441.7 240.5,432.0 245.5,440.5 250.6,435.6 255.6,439.5 260.7,438.7 265.8,437.7" fill="none" stroke="#566f88" stroke-width="1.25" stroke-linejoin="round"/><polyline points="210.2,457.2 215.2,453.8 220.3,452.6 225.3,454.4 230.4,460.2 235.4,459.3 240.5,460.9 245.5,450.2 250.6,459.3 255.6,459.3 260.7,450.2 265.8,451.0" fill="none" stroke="#566f88" stroke-width="1.25" stroke-linejoin="round"/><polyline points="210.2,476.7 215.2,472.7 220.3,468.4 225.3,470.2 230.4,476.1 235.4,472.7 240.5,478.1 245.5,478.1 250.6,470.8 255.6,479.4 260.7,479.4 265.8,472.7" fill="none" stroke="#566f88" stroke-width="1.25" stroke-linejoin="round"/><polyline points="210.2,498.3 215.2,489.3 220.3,490.3 225.3,496.6 230.4,493.5 235.4,493.5 240.5,492.6 245.5,488.6 250.6,493.3 255.6,487.7 260.7,495.6 265.8,498.6" fill="none" stroke="#566f88" stroke-width="1.25" stroke-linejoin="round"/><polyline points="210.2,507.2 215.2,506.5 220.3,517.4 225.3,516.1 230.4,507.2 235.4,513.2 240.5,507.2 245.5,512.2 250.6,510.5 255.6,510.5 260.7,509.4 265.8,508.5" fill="none" stroke="#566f88" stroke-width="1.25" stroke-linejoin="round"/><polyline points="210.2,524.8 215.2,535.7 220.3,530.4 225.3,533.0 230.4,528.4 235.4,525.8 240.5,526.7 245.5,530.8 250.6,525.8 255.6,533.0 260.7,533.7 265.8,529.3" fill="none" stroke="#566f88" stroke-width="1.25" stroke-linejoin="round"/><polyline points="210.2,553.2 215.2,554.3 220.3,543.7 225.3,550.3 230.4,551.4 235.4,552.3 240.5,544.7 245.5,552.9 250.6,549.6 255.6,543.9 260.7,552.9 265.8,547.0" fill="none" stroke="#566f88" stroke-width="1.25" stroke-linejoin="round"/><polyline points="210.2,572.2 215.2,566.5 220.3,567.8 225.3,570.2 230.4,570.5 235.4,572.8 240.5,563.8 245.5,562.9 250.6,571.5 255.6,562.0 260.7,563.6 265.8,571.5" fill="none" stroke="#566f88" stroke-width="1.25" stroke-linejoin="round"/><polyline points="210.2,590.3 215.2,590.3 220.3,582.8 225.3,591.4 230.4,586.1 235.4,580.8 240.5,586.1 245.5,590.1 250.6,580.8 255.6,586.1 260.7,591.4 265.8,589.8" fill="none" stroke="#566f88" stroke-width="1.25" stroke-linejoin="round"/><rect x="340.8" y="381.0" width="60.6" height="1.1" fill="#2a4468" opacity="0.75"/><rect x="340.8" y="377.0" width="5.1" height="5.0" fill="#243f63"/><rect x="345.9" y="381.2" width="5.1" height="5.0" fill="#243f63"/><rect x="355.9" y="379.0" width="5.1" height="3.0" fill="#243f63"/><rect x="361.0" y="377.0" width="5.1" height="5.0" fill="#243f63"/><rect x="366.1" y="381.2" width="5.1" height="2.5" fill="#243f63"/><rect x="371.1" y="381.2" width="5.1" height="5.0" fill="#243f63"/><rect x="376.2" y="377.0" width="5.1" height="5.0" fill="#243f63"/><rect x="386.2" y="378.5" width="5.1" height="3.5" fill="#243f63"/><rect x="396.4" y="376.5" width="5.1" height="5.5" fill="#243f63"/><rect x="340.8" y="399.5" width="60.6" height="1.1" fill="#2a4468" opacity="0.75"/><rect x="340.8" y="395.5" width="5.1" height="5.0" fill="#243f63"/><rect x="345.9" y="399.7" width="5.1" height="5.8" fill="#243f63"/><rect x="350.9" y="399.7" width="5.1" height="5.8" fill="#243f63"/><rect x="371.1" y="395.0" width="5.1" height="5.5" fill="#243f63"/><rect x="376.2" y="395.0" width="5.1" height="5.5" fill="#243f63"/><rect x="381.2" y="399.7" width="5.1" height="3.8" fill="#243f63"/><rect x="386.2" y="398.5" width="5.1" height="2.0" fill="#243f63"/><rect x="391.3" y="399.7" width="5.1" height="2.8" fill="#243f63"/><rect x="396.4" y="399.7" width="5.1" height="1.5" fill="#243f63"/><rect x="340.8" y="418.3" width="60.6" height="1.1" fill="#2a4468" opacity="0.75"/><rect x="340.8" y="414.1" width="5.1" height="5.2" fill="#243f63"/><rect x="345.9" y="418.5" width="5.1" height="2.9" fill="#243f63"/><rect x="350.9" y="413.8" width="5.1" height="5.5" fill="#243f63"/><rect x="361.0" y="418.5" width="5.1" height="5.5" fill="#243f63"/><rect x="376.2" y="418.5" width="5.1" height="5.5" fill="#243f63"/><rect x="381.2" y="413.8" width="5.1" height="5.5" fill="#243f63"/><rect x="391.3" y="418.5" width="5.1" height="2.5" fill="#243f63"/><rect x="396.4" y="418.5" width="5.1" height="3.9" fill="#243f63"/><rect x="340.8" y="435.3" width="60.6" height="1.1" fill="#2a4468" opacity="0.75"/><rect x="340.8" y="435.5" width="5.1" height="7.3" fill="#243f63"/><rect x="345.9" y="435.5" width="5.1" height="7.3" fill="#243f63"/><rect x="355.9" y="435.5" width="5.1" height="6.3" fill="#243f63"/><rect x="361.0" y="432.3" width="5.1" height="4.0" fill="#243f63"/><rect x="366.1" y="435.5" width="5.1" height="3.5" fill="#243f63"/><rect x="371.1" y="433.3" width="5.1" height="3.0" fill="#243f63"/><rect x="376.2" y="435.5" width="5.1" height="5.3" fill="#243f63"/><rect x="381.2" y="435.5" width="5.1" height="2.5" fill="#243f63"/><rect x="386.2" y="432.3" width="5.1" height="4.0" fill="#243f63"/><rect x="396.4" y="435.5" width="5.1" height="1.5" fill="#243f63"/><rect x="340.8" y="455.4" width="60.6" height="1.1" fill="#2a4468" opacity="0.75"/><rect x="340.8" y="455.6" width="5.1" height="6.0" fill="#243f63"/><rect x="345.9" y="455.6" width="5.1" height="4.3" fill="#243f63"/><rect x="355.9" y="455.6" width="5.1" height="6.0" fill="#243f63"/><rect x="361.0" y="455.6" width="5.1" height="6.0" fill="#243f63"/><rect x="371.1" y="453.3" width="5.1" height="3.1" fill="#243f63"/><rect x="376.2" y="455.6" width="5.1" height="2.3" fill="#243f63"/><rect x="381.2" y="451.6" width="5.1" height="4.8" fill="#243f63"/><rect x="386.2" y="450.6" width="5.1" height="5.8" fill="#243f63"/><rect x="391.3" y="451.6" width="5.1" height="4.8" fill="#243f63"/><rect x="396.4" y="455.6" width="5.1" height="4.3" fill="#243f63"/><rect x="340.8" y="474.0" width="60.6" height="1.1" fill="#2a4468" opacity="0.75"/><rect x="340.8" y="470.0" width="5.1" height="5.0" fill="#243f63"/><rect x="345.9" y="472.8" width="5.1" height="2.2" fill="#243f63"/><rect x="350.9" y="471.0" width="5.1" height="4.0" fill="#243f63"/><rect x="355.9" y="474.2" width="5.1" height="3.3" fill="#243f63"/><rect x="361.0" y="474.2" width="5.1" height="4.8" fill="#243f63"/><rect x="366.1" y="469.0" width="5.1" height="6.0" fill="#243f63"/><rect x="376.2" y="474.2" width="5.1" height="6.0" fill="#243f63"/><rect x="381.2" y="474.2" width="5.1" height="5.3" fill="#243f63"/><rect x="386.2" y="474.2" width="5.1" height="5.3" fill="#243f63"/><rect x="391.3" y="474.2" width="5.1" height="6.0" fill="#243f63"/><rect x="396.4" y="472.0" width="5.1" height="3.0" fill="#243f63"/><rect x="340.8" y="492.3" width="60.6" height="1.1" fill="#2a4468" opacity="0.75"/><rect x="345.9" y="492.5" width="5.1" height="5.3" fill="#243f63"/><rect x="350.9" y="492.5" width="5.1" height="6.5" fill="#243f63"/><rect x="355.9" y="490.9" width="5.1" height="2.4" fill="#243f63"/><rect x="361.0" y="487.9" width="5.1" height="5.4" fill="#243f63"/><rect x="366.1" y="492.5" width="5.1" height="3.7" fill="#243f63"/><rect x="371.1" y="490.5" width="5.1" height="2.8" fill="#243f63"/><rect x="381.2" y="487.9" width="5.1" height="5.4" fill="#243f63"/><rect x="396.4" y="489.9" width="5.1" height="3.4" fill="#243f63"/><rect x="340.8" y="511.3" width="60.6" height="1.1" fill="#2a4468" opacity="0.75"/><rect x="340.8" y="511.5" width="5.1" height="4.5" fill="#243f63"/><rect x="345.9" y="506.5" width="5.1" height="5.8" fill="#243f63"/><rect x="350.9" y="506.5" width="5.1" height="5.8" fill="#243f63"/><rect x="355.9" y="511.5" width="5.1" height="6.1" fill="#243f63"/><rect x="366.1" y="511.5" width="5.1" height="6.1" fill="#243f63"/><rect x="376.2" y="511.5" width="5.1" height="3.2" fill="#243f63"/><rect x="381.2" y="511.5" width="5.1" height="4.5" fill="#243f63"/><rect x="386.2" y="511.5" width="5.1" height="4.5" fill="#243f63"/><rect x="391.3" y="511.5" width="5.1" height="5.1" fill="#243f63"/><rect x="396.4" y="509.2" width="5.1" height="3.1" fill="#243f63"/><rect x="340.8" y="530.4" width="60.6" height="1.1" fill="#2a4468" opacity="0.75"/><rect x="340.8" y="530.6" width="5.1" height="4.5" fill="#243f63"/><rect x="345.9" y="530.6" width="5.1" height="5.3" fill="#243f63"/><rect x="350.9" y="525.4" width="5.1" height="6.0" fill="#243f63"/><rect x="355.9" y="530.6" width="5.1" height="5.3" fill="#243f63"/><rect x="361.0" y="530.6" width="5.1" height="4.3" fill="#243f63"/><rect x="366.1" y="530.6" width="5.1" height="4.3" fill="#243f63"/><rect x="381.2" y="527.0" width="5.1" height="4.4" fill="#243f63"/><rect x="386.2" y="525.4" width="5.1" height="6.0" fill="#243f63"/><rect x="396.4" y="526.0" width="5.1" height="5.4" fill="#243f63"/><rect x="340.8" y="549.8" width="60.6" height="1.1" fill="#2a4468" opacity="0.75"/><rect x="340.8" y="550.0" width="5.1" height="4.7" fill="#243f63"/><rect x="345.9" y="547.0" width="5.1" height="3.8" fill="#243f63"/><rect x="350.9" y="544.0" width="5.1" height="6.8" fill="#243f63"/><rect x="361.0" y="550.0" width="5.1" height="3.8" fill="#243f63"/><rect x="366.1" y="547.6" width="5.1" height="3.2" fill="#243f63"/><rect x="371.1" y="548.3" width="5.1" height="2.5" fill="#243f63"/><rect x="376.2" y="550.0" width="5.1" height="4.7" fill="#243f63"/><rect x="381.2" y="550.0" width="5.1" height="4.7" fill="#243f63"/><rect x="386.2" y="547.0" width="5.1" height="3.8" fill="#243f63"/><rect x="340.8" y="567.5" width="60.6" height="1.1" fill="#2a4468" opacity="0.75"/><rect x="340.8" y="567.7" width="5.1" height="5.5" fill="#243f63"/><rect x="345.9" y="566.1" width="5.1" height="2.4" fill="#243f63"/><rect x="355.9" y="566.1" width="5.1" height="2.4" fill="#243f63"/><rect x="361.0" y="567.7" width="5.1" height="2.0" fill="#243f63"/><rect x="366.1" y="564.2" width="5.1" height="4.3" fill="#243f63"/><rect x="371.1" y="565.2" width="5.1" height="3.3" fill="#243f63"/><rect x="376.2" y="567.7" width="5.1" height="3.8" fill="#243f63"/><rect x="381.2" y="562.2" width="5.1" height="6.3" fill="#243f63"/><rect x="391.3" y="566.1" width="5.1" height="2.4" fill="#243f63"/><rect x="340.8" y="585.9" width="60.6" height="1.1" fill="#2a4468" opacity="0.75"/><rect x="340.8" y="586.1" width="5.1" height="5.7" fill="#243f63"/><rect x="361.0" y="581.0" width="5.1" height="5.9" fill="#243f63"/><rect x="376.2" y="586.1" width="5.1" height="4.8" fill="#243f63"/><rect x="386.2" y="581.0" width="5.1" height="5.9" fill="#243f63"/><rect x="391.3" y="586.1" width="5.1" height="4.8" fill="#243f63"/><rect x="396.4" y="586.1" width="5.1" height="5.7" fill="#243f63"/><rect x="489" y="385.6" width="60.6" height="1" fill="#2a4468" opacity="0.75"/><rect x="489.0" y="382.3" width="5.1" height="4.3" fill="#243f63"/><rect x="494.1" y="383.6" width="5.1" height="3.0" fill="#243f63"/><rect x="499.1" y="376.3" width="5.1" height="10.3" fill="#243f63"/><rect x="504.1" y="376.3" width="5.1" height="10.3" fill="#243f63"/><rect x="509.2" y="381.6" width="5.1" height="5.0" fill="#243f63"/><rect x="514.2" y="381.6" width="5.1" height="5.0" fill="#243f63"/><rect x="519.3" y="378.0" width="5.1" height="8.6" fill="#243f63"/><rect x="529.4" y="378.0" width="5.1" height="8.6" fill="#243f63"/><rect x="534.5" y="379.0" width="5.1" height="7.6" fill="#243f63"/><rect x="539.5" y="384.2" width="5.1" height="2.4" fill="#243f63"/><rect x="544.5" y="376.3" width="5.1" height="10.3" fill="#243f63"/><rect x="489" y="404.5" width="60.6" height="1" fill="#2a4468" opacity="0.75"/><rect x="489.0" y="403.1" width="5.1" height="2.4" fill="#243f63"/><rect x="494.1" y="402.1" width="5.1" height="3.4" fill="#243f63"/><rect x="499.1" y="403.1" width="5.1" height="2.4" fill="#243f63"/><rect x="509.2" y="394.9" width="5.1" height="10.6" fill="#243f63"/><rect x="519.3" y="398.5" width="5.1" height="7.0" fill="#243f63"/><rect x="524.4" y="403.1" width="5.1" height="2.4" fill="#243f63"/><rect x="529.4" y="400.2" width="5.1" height="5.3" fill="#243f63"/><rect x="534.5" y="394.9" width="5.1" height="10.6" fill="#243f63"/><rect x="539.5" y="396.8" width="5.1" height="8.7" fill="#243f63"/><rect x="544.5" y="396.5" width="5.1" height="9.0" fill="#243f63"/><rect x="489" y="422.7" width="60.6" height="1" fill="#2a4468" opacity="0.75"/><rect x="489.0" y="419.0" width="5.1" height="4.7" fill="#243f63"/><rect x="499.1" y="419.0" width="5.1" height="4.7" fill="#243f63"/><rect x="504.1" y="422.7" width="5.1" height="1.0" fill="#243f63"/><rect x="509.2" y="413.4" width="5.1" height="10.3" fill="#243f63"/><rect x="514.2" y="419.0" width="5.1" height="4.7" fill="#243f63"/><rect x="524.4" y="417.0" width="5.1" height="6.7" fill="#243f63"/><rect x="534.5" y="422.0" width="5.1" height="1.7" fill="#243f63"/><rect x="539.5" y="414.0" width="5.1" height="9.7" fill="#243f63"/><rect x="544.5" y="421.0" width="5.1" height="2.7" fill="#243f63"/><rect x="489" y="441.6" width="60.6" height="1" fill="#2a4468" opacity="0.75"/><rect x="489.0" y="441.2" width="5.1" height="1.4" fill="#243f63"/><rect x="494.1" y="438.6" width="5.1" height="4.0" fill="#243f63"/><rect x="504.1" y="432.0" width="5.1" height="10.6" fill="#243f63"/><rect x="509.2" y="441.2" width="5.1" height="1.4" fill="#243f63"/><rect x="514.2" y="433.0" width="5.1" height="9.6" fill="#243f63"/><rect x="519.3" y="434.0" width="5.1" height="8.6" fill="#243f63"/><rect x="524.4" y="432.0" width="5.1" height="10.6" fill="#243f63"/><rect x="529.4" y="440.2" width="5.1" height="2.4" fill="#243f63"/><rect x="534.5" y="437.0" width="5.1" height="5.6" fill="#243f63"/><rect x="539.5" y="432.0" width="5.1" height="10.6" fill="#243f63"/><rect x="544.5" y="439.2" width="5.1" height="3.4" fill="#243f63"/><rect x="489" y="460.4" width="60.6" height="1" fill="#2a4468" opacity="0.75"/><rect x="489.0" y="459.1" width="5.1" height="2.3" fill="#243f63"/><rect x="499.1" y="459.1" width="5.1" height="2.3" fill="#243f63"/><rect x="504.1" y="452.5" width="5.1" height="8.9" fill="#243f63"/><rect x="509.2" y="450.5" width="5.1" height="10.9" fill="#243f63"/><rect x="514.2" y="453.5" width="5.1" height="7.9" fill="#243f63"/><rect x="519.3" y="456.1" width="5.1" height="5.3" fill="#243f63"/><rect x="524.4" y="454.2" width="5.1" height="7.2" fill="#243f63"/><rect x="534.5" y="458.1" width="5.1" height="3.3" fill="#243f63"/><rect x="544.5" y="455.2" width="5.1" height="6.2" fill="#243f63"/><rect x="489" y="478.7" width="60.6" height="1" fill="#2a4468" opacity="0.75"/><rect x="489.0" y="475.0" width="5.1" height="4.7" fill="#243f63"/><rect x="494.1" y="471.4" width="5.1" height="8.3" fill="#243f63"/><rect x="499.1" y="469.0" width="5.1" height="10.7" fill="#243f63"/><rect x="504.1" y="471.4" width="5.1" height="8.3" fill="#243f63"/><rect x="509.2" y="477.0" width="5.1" height="2.7" fill="#243f63"/><rect x="519.3" y="478.4" width="5.1" height="1.3" fill="#243f63"/><rect x="524.4" y="477.0" width="5.1" height="2.7" fill="#243f63"/><rect x="529.4" y="470.0" width="5.1" height="9.7" fill="#243f63"/><rect x="534.5" y="470.0" width="5.1" height="9.7" fill="#243f63"/><rect x="539.5" y="476.0" width="5.1" height="3.7" fill="#243f63"/><rect x="544.5" y="473.0" width="5.1" height="6.7" fill="#243f63"/><rect x="489" y="497.6" width="60.6" height="1" fill="#2a4468" opacity="0.75"/><rect x="489.0" y="496.2" width="5.1" height="2.4" fill="#243f63"/><rect x="494.1" y="488.0" width="5.1" height="10.6" fill="#243f63"/><rect x="499.1" y="492.6" width="5.1" height="6.0" fill="#243f63"/><rect x="504.1" y="496.2" width="5.1" height="2.4" fill="#243f63"/><rect x="509.2" y="490.0" width="5.1" height="8.6" fill="#243f63"/><rect x="514.2" y="492.0" width="5.1" height="6.6" fill="#243f63"/><rect x="524.4" y="494.2" width="5.1" height="4.4" fill="#243f63"/><rect x="529.4" y="489.0" width="5.1" height="9.6" fill="#243f63"/><rect x="534.5" y="491.0" width="5.1" height="7.6" fill="#243f63"/><rect x="539.5" y="489.0" width="5.1" height="9.6" fill="#243f63"/><rect x="544.5" y="496.2" width="5.1" height="2.4" fill="#243f63"/><rect x="489" y="516.4" width="60.6" height="1" fill="#2a4468" opacity="0.75"/><rect x="489.0" y="511.1" width="5.1" height="6.3" fill="#243f63"/><rect x="494.1" y="509.2" width="5.1" height="8.2" fill="#243f63"/><rect x="499.1" y="516.1" width="5.1" height="1.3" fill="#243f63"/><rect x="504.1" y="508.2" width="5.1" height="9.2" fill="#243f63"/><rect x="514.2" y="506.5" width="5.1" height="10.9" fill="#243f63"/><rect x="519.3" y="515.1" width="5.1" height="2.3" fill="#243f63"/><rect x="529.4" y="511.1" width="5.1" height="6.3" fill="#243f63"/><rect x="534.5" y="509.2" width="5.1" height="8.2" fill="#243f63"/><rect x="539.5" y="512.1" width="5.1" height="5.3" fill="#243f63"/><rect x="544.5" y="515.1" width="5.1" height="2.3" fill="#243f63"/><rect x="489" y="534.7" width="60.6" height="1" fill="#2a4468" opacity="0.75"/><rect x="489.0" y="525.0" width="5.1" height="10.7" fill="#243f63"/><rect x="494.1" y="528.0" width="5.1" height="7.7" fill="#243f63"/><rect x="499.1" y="532.7" width="5.1" height="3.0" fill="#243f63"/><rect x="504.1" y="527.0" width="5.1" height="8.7" fill="#243f63"/><rect x="514.2" y="530.0" width="5.1" height="5.7" fill="#243f63"/><rect x="519.3" y="532.7" width="5.1" height="3.0" fill="#243f63"/><rect x="529.4" y="528.0" width="5.1" height="7.7" fill="#243f63"/><rect x="534.5" y="529.0" width="5.1" height="6.7" fill="#243f63"/><rect x="544.5" y="529.0" width="5.1" height="6.7" fill="#243f63"/><rect x="489" y="553.5" width="60.6" height="1" fill="#2a4468" opacity="0.75"/><rect x="489.0" y="546.0" width="5.1" height="8.5" fill="#243f63"/><rect x="494.1" y="547.0" width="5.1" height="7.5" fill="#243f63"/><rect x="499.1" y="544.0" width="5.1" height="10.5" fill="#243f63"/><rect x="504.1" y="547.6" width="5.1" height="6.9" fill="#243f63"/><rect x="519.3" y="553.2" width="5.1" height="1.3" fill="#243f63"/><rect x="524.4" y="548.6" width="5.1" height="5.9" fill="#243f63"/><rect x="529.4" y="544.0" width="5.1" height="10.5" fill="#243f63"/><rect x="534.5" y="553.2" width="5.1" height="1.3" fill="#243f63"/><rect x="539.5" y="552.2" width="5.1" height="2.3" fill="#243f63"/><rect x="544.5" y="552.2" width="5.1" height="2.3" fill="#243f63"/><rect x="489" y="572.1" width="60.6" height="1" fill="#2a4468" opacity="0.75"/><rect x="499.1" y="568.1" width="5.1" height="5.0" fill="#243f63"/><rect x="504.1" y="571.1" width="5.1" height="2.0" fill="#243f63"/><rect x="509.2" y="568.1" width="5.1" height="5.0" fill="#243f63"/><rect x="514.2" y="566.1" width="5.1" height="7.0" fill="#243f63"/><rect x="519.3" y="567.1" width="5.1" height="6.0" fill="#243f63"/><rect x="524.4" y="566.1" width="5.1" height="7.0" fill="#243f63"/><rect x="529.4" y="571.1" width="5.1" height="2.0" fill="#243f63"/><rect x="534.5" y="568.1" width="5.1" height="5.0" fill="#243f63"/><rect x="539.5" y="562.2" width="5.1" height="10.9" fill="#243f63"/><rect x="544.5" y="565.2" width="5.1" height="7.9" fill="#243f63"/><rect x="489" y="590.7" width="60.6" height="1" fill="#2a4468" opacity="0.75"/><rect x="489.0" y="589.3" width="5.1" height="2.4" fill="#243f63"/><rect x="494.1" y="581.0" width="5.1" height="10.7" fill="#243f63"/><rect x="499.1" y="584.0" width="5.1" height="7.7" fill="#243f63"/><rect x="504.1" y="586.0" width="5.1" height="5.7" fill="#243f63"/><rect x="509.2" y="582.0" width="5.1" height="9.7" fill="#243f63"/><rect x="519.3" y="590.0" width="5.1" height="1.7" fill="#243f63"/><rect x="529.4" y="585.4" width="5.1" height="6.3" fill="#243f63"/><rect x="534.5" y="583.0" width="5.1" height="8.7" fill="#243f63"/><rect x="544.5" y="582.0" width="5.1" height="9.7" fill="#243f63"/></svg>
<div class="a" style="left:571px;top:385px;width:459px;height:284.5px;background:#fff;"></div>
<div class="a" style="left:571px;top:387px;width:459px;height:7px;background:linear-gradient(#f4f4f4,#c9cacd);border:1px solid #80858f;"></div>
<div class="a" style="left:571px;top:394px;width:459px;height:17px;background:linear-gradient(#f7f8f9,#eef0f2);border-bottom:1px solid #dcdde0;"></div>
<div class="a" style="left:598px;top:394px;width:1px;height:17px;background:#dcdde0;"></div>
<div class="a" style="left:684px;top:394px;width:1px;height:17px;background:#dcdde0;"></div>
<div class="a" style="left:770px;top:394px;width:1px;height:17px;background:#dcdde0;"></div>
<div class="a" style="left:856px;top:394px;width:1px;height:17px;background:#dcdde0;"></div>
<div class="a" style="left:943px;top:394px;width:1px;height:17px;background:#dcdde0;"></div>
<div class="a" style="left:770px;top:411px;width:1px;height:258px;background:#f0f0f0;"></div>
<div class="a" style="left:855px;top:411px;width:1px;height:258px;background:#f0f0f0;"></div>
<div class="a" style="left:942px;top:411px;width:1px;height:258px;background:#f0f0f0;"></div>
<div class="a" style="left:1028px;top:394px;width:1px;height:275px;background:#ececec;"></div>
<div class="t" style="top:397px;font-size:8.5px;color:#333;left:602.8px;">Freight expenses</div>
<div class="t" style="top:397px;font-size:8.5px;color:#333;left:688.7px;">Customer ID</div>
<div class="t" style="top:397px;font-size:8.5px;color:#333;left:775px;">Company Name</div>
<div class="t" style="top:397px;font-size:8.5px;color:#333;left:861.6px;">Contact Name</div>
<div class="t" style="top:397px;font-size:8.5px;color:#333;left:947.8px;">Address</div>
<div class="t" style="top:422px;font-size:8.3px;color:#333;left:687.8px;">ALFKI</div>
<div class="t" style="top:422px;font-size:8.5px;color:#333;left:773.8px;width:79.5px;overflow:hidden;">Alfreds Futterkiste</div>
<div class="t" style="top:422px;font-size:8.5px;color:#333;left:860px;">Maria Anders</div>
<div class="t" style="top:422px;font-size:8.5px;color:#333;left:946px;width:79.5px;overflow:hidden;">Obere Str. 57</div>
<div class="t" style="top:450px;font-size:8.3px;color:#333;left:687.8px;">ANATR</div>
<div class="t" style="top:450px;font-size:8.5px;color:#333;left:773.8px;width:79.5px;overflow:hidden;">Ana Trujillo Empared</div>
<div class="t" style="top:450px;font-size:8.5px;color:#333;left:860px;">Ana Trujillo</div>
<div class="t" style="top:450px;font-size:8.5px;color:#333;left:946px;width:79.5px;overflow:hidden;">Avda. de la Constituc</div>
<div class="t" style="top:479px;font-size:8.3px;color:#333;left:687.8px;">ANTON</div>
<div class="t" style="top:479px;font-size:8.5px;color:#333;left:773.8px;width:79.5px;overflow:hidden;">Antonio Moreno Taq</div>
<div class="t" style="top:479px;font-size:8.5px;color:#333;left:860px;">Antonio Moreno</div>
<div class="t" style="top:479px;font-size:8.5px;color:#333;left:946px;width:79.5px;overflow:hidden;">Mataderos  2312</div>
<div class="t" style="top:507px;font-size:8.3px;color:#333;left:687.8px;">AROUT</div>
<div class="t" style="top:507px;font-size:8.5px;color:#333;left:773.8px;width:79.5px;overflow:hidden;">Around the Horn</div>
<div class="t" style="top:507px;font-size:8.5px;color:#333;left:860px;">Thomas Hardy</div>
<div class="t" style="top:507px;font-size:8.5px;color:#333;left:946px;width:79.5px;overflow:hidden;">120 Hanover Sq.</div>
<div class="t" style="top:535px;font-size:8.3px;color:#333;left:687.8px;">BERGS</div>
<div class="t" style="top:536px;font-size:8.5px;color:#333;left:773.8px;width:79.5px;overflow:hidden;">Berglunds snabbköp</div>
<div class="t" style="top:536px;font-size:8.5px;color:#333;left:860px;">Christina Berglund</div>
<div class="t" style="top:536px;font-size:8.5px;color:#333;left:946px;width:79.5px;overflow:hidden;">Berguvsvägen  8</div>
<div class="t" style="top:564px;font-size:8.3px;color:#333;left:687.8px;">BLAUS</div>
<div class="t" style="top:564px;font-size:8.5px;color:#333;left:773.8px;width:79.5px;overflow:hidden;">Blauer See Delikatess</div>
<div class="t" style="top:564px;font-size:8.5px;color:#333;left:860px;">Hanna Moos</div>
<div class="t" style="top:564px;font-size:8.5px;color:#333;left:946px;width:79.5px;overflow:hidden;">Forsterstr. 57</div>
<div class="t" style="top:592px;font-size:8.3px;color:#333;left:687.8px;">BLONP</div>
<div class="t" style="top:592px;font-size:8.5px;color:#333;left:773.8px;width:79.5px;overflow:hidden;">Blondesddsl père et f</div>
<div class="t" style="top:592px;font-size:8.5px;color:#333;left:860px;">Frédérique Citeaux</div>
<div class="t" style="top:592px;font-size:8.5px;color:#333;left:946px;width:79.5px;overflow:hidden;">24, place Kléber</div>
<div class="t" style="top:621px;font-size:8.3px;color:#333;left:687.8px;">BOLID</div>
<div class="t" style="top:621px;font-size:8.5px;color:#333;left:773.8px;width:79.5px;overflow:hidden;">Bólido Comidas prep</div>
<div class="t" style="top:621px;font-size:8.5px;color:#333;left:860px;">Martín Sommer</div>
<div class="t" style="top:621px;font-size:8.5px;color:#333;left:946px;width:79.5px;overflow:hidden;">C/ Araquil, 67</div>
<div class="t" style="top:649px;font-size:8.3px;color:#333;left:687.8px;">BONAP</div>
<div class="t" style="top:649px;font-size:8.5px;color:#333;left:773.8px;width:79.5px;overflow:hidden;">Bon app'</div>
<div class="t" style="top:649px;font-size:8.5px;color:#333;left:860px;">Laurence Lebihan</div>
<div class="t" style="top:649px;font-size:8.5px;color:#333;left:946px;width:79.5px;overflow:hidden;">12, rue des Bouchers</div>
<svg class="a" style="left:0;top:0" width="1440" height="905"><rect x="601.2" y="420.6" width="82.8" height="15.6" fill="#a6ff2a"/><polyline points="601.2,426.8 621.2,417.1 641.5,429.1 661.3,414.8 684,424.7" fill="none" stroke="#9aa6b6" stroke-width="1.2" stroke-linejoin="round"/><circle cx="661.3" cy="414.8" r="2.4" fill="#f07f3c"/><circle cx="577.6" cy="425.1" r="3.2" fill="#fff" stroke="#9a9a9a" stroke-width="0.9"/><path d="M575.6 425.1H579.6M577.6 423.1V427.1" stroke="#111" stroke-width="1.1"/><path d="M587 423.0L590.5 425.1L587 427.2Z" fill="#eeeeee"/><rect x="601.2" y="443" width="82.8" height="21.5" fill="#a6ff2a"/><polyline points="601.2,464.5 634.8,443.1 668.4,459.5 684,453" fill="none" stroke="#9aa6b6" stroke-width="1.2" stroke-linejoin="round"/><circle cx="634.8" cy="443.1" r="2.4" fill="#f07f3c"/><circle cx="601.2" cy="464.5" r="2.4" fill="#3b5673"/><circle cx="577.6" cy="453.5" r="3.2" fill="#fff" stroke="#9a9a9a" stroke-width="0.9"/><path d="M575.6 453.5H579.6M577.6 451.5V455.5" stroke="#111" stroke-width="1.1"/><path d="M587 451.4L590.5 453.5L587 455.6Z" fill="#eeeeee"/><rect x="601.2" y="480.7" width="82.8" height="12.1" fill="#a6ff2a"/><polyline points="601.2,487.8 617.5,481.3 634.8,489.9 651.6,471.5 668.4,492.8 684,485.2" fill="none" stroke="#9aa6b6" stroke-width="1.2" stroke-linejoin="round"/><circle cx="651.6" cy="471.5" r="2.4" fill="#f07f3c"/><circle cx="668.4" cy="492.8" r="2.4" fill="#3b5673"/><circle cx="577.6" cy="482.0" r="3.2" fill="#fff" stroke="#9a9a9a" stroke-width="0.9"/><path d="M575.6 482.0H579.6M577.6 480.0V484.0" stroke="#111" stroke-width="1.1"/><path d="M587 479.9L590.5 482.0L587 484.1Z" fill="#eeeeee"/><rect x="601.2" y="514.7" width="82.8" height="6.7" fill="#a6ff2a"/><polyline points="601.2,515.7 617.5,517.9 626.5,511.1 635.3,518.7 642.8,520.5 651.6,518.7 659.9,500.2 668.4,521 676.7,521.4 684,518.2" fill="none" stroke="#9aa6b6" stroke-width="1.2" stroke-linejoin="round"/><circle cx="659.9" cy="500.2" r="2.4" fill="#f07f3c"/><circle cx="676.7" cy="521.4" r="2.4" fill="#3b5673"/><circle cx="577.6" cy="510.4" r="3.2" fill="#fff" stroke="#9a9a9a" stroke-width="0.9"/><path d="M575.6 510.4H579.6M577.6 508.4V512.4" stroke="#111" stroke-width="1.1"/><path d="M587 508.3L590.5 510.4L587 512.5Z" fill="#eeeeee"/><rect x="601.2" y="546" width="82.8" height="4.0" fill="#a6ff2a"/><polyline points="601.2,542.6 607.4,549.2 613.1,535.6 618.9,550 625.1,549.2 630.7,528.5 636.6,539.4 642.4,537.7 648.4,545.6 654.8,541.6 660.4,548.6 666.6,540.3 672.5,549.2 678.1,549.2 684,533.8" fill="none" stroke="#9aa6b6" stroke-width="1.2" stroke-linejoin="round"/><circle cx="630.7" cy="528.5" r="2.4" fill="#f07f3c"/><circle cx="618.9" cy="550" r="2.4" fill="#3b5673"/><circle cx="577.6" cy="538.9" r="3.2" fill="#fff" stroke="#9a9a9a" stroke-width="0.9"/><path d="M575.6 538.9H579.6M577.6 536.9V540.9" stroke="#111" stroke-width="1.1"/><path d="M587 536.8L590.5 538.9L587 541.0Z" fill="#eeeeee"/><rect x="601.2" y="558.4" width="82.8" height="19.9" fill="#a6ff2a"/><polyline points="601.2,575.7 618,578.3 634.8,567.4 651.6,578 668.4,557.1 684,560.3" fill="none" stroke="#9aa6b6" stroke-width="1.2" stroke-linejoin="round"/><circle cx="668.4" cy="557.1" r="2.4" fill="#f07f3c"/><circle cx="618" cy="578.3" r="2.4" fill="#3b5673"/><circle cx="577.6" cy="567.3" r="3.2" fill="#fff" stroke="#9a9a9a" stroke-width="0.9"/><path d="M575.6 567.3H579.6M577.6 565.3V569.3" stroke="#111" stroke-width="1.1"/><path d="M587 565.2L590.5 567.3L587 569.4Z" fill="#eeeeee"/><rect x="601.2" y="600.8" width="82.8" height="6.2" fill="#a6ff2a"/><polyline points="601.2,600.4 611.3,606.6 621.6,588.9 631.3,585.7 641.9,600.4 651.6,606.6 661.3,595.1 684,604" fill="none" stroke="#9aa6b6" stroke-width="1.2" stroke-linejoin="round"/><circle cx="631.3" cy="585.7" r="2.4" fill="#f07f3c"/><circle cx="611.3" cy="606.6" r="2.4" fill="#3b5673"/><circle cx="577.6" cy="595.7" r="3.2" fill="#fff" stroke="#9a9a9a" stroke-width="0.9"/><path d="M575.6 595.7H579.6M577.6 593.7V597.7" stroke="#111" stroke-width="1.1"/><path d="M587 593.6L590.5 595.7L587 597.8Z" fill="#eeeeee"/><rect x="601.2" y="626.4" width="82.8" height="8.8" fill="#a6ff2a"/><polyline points="601.2,619.3 651.6,614 684,626.9" fill="none" stroke="#9aa6b6" stroke-width="1.2" stroke-linejoin="round"/><circle cx="651.6" cy="614" r="2.4" fill="#f07f3c"/><circle cx="577.6" cy="624.2" r="3.2" fill="#fff" stroke="#9a9a9a" stroke-width="0.9"/><path d="M575.6 624.2H579.6M577.6 622.2V626.2" stroke="#111" stroke-width="1.1"/><path d="M587 622.1L590.5 624.2L587 626.3Z" fill="#eeeeee"/><rect x="601.2" y="661.4" width="82.8" height="2.1" fill="#a6ff2a"/><polyline points="601.2,664 607.4,654 619.8,660.5 626.3,642.3 633,662.8 639.2,657 651.6,662.8 664.9,662.8 676.7,657 684,661" fill="none" stroke="#9aa6b6" stroke-width="1.2" stroke-linejoin="round"/><circle cx="626.3" cy="642.3" r="2.4" fill="#f07f3c"/><circle cx="601.2" cy="664" r="2.4" fill="#3b5673"/><circle cx="577.6" cy="652.6" r="3.2" fill="#fff" stroke="#9a9a9a" stroke-width="0.9"/><path d="M575.6 652.6H579.6M577.6 650.6V654.6" stroke="#111" stroke-width="1.1"/><path d="M587 650.5L590.5 652.6L587 654.7Z" fill="#eeeeee"/></svg>
<div class="a" style="left:1044px;top:321px;width:317px;height:198px;background:#fff;"></div>
<div class="a" style="left:1052.5px;top:327.5px;width:146px;height:87.5px;background:#fff;border:1px solid #cfcfcf;box-shadow:1px 1px 2px rgba(0,0,0,0.2);"></div>
<div class="t" style="top:333px;font-size:12.1px;color:#3a3a3a;left:1062.0px;">Hitch Rack - 4-Bike</div>
<div class="t" style="top:349px;font-size:8.2px;color:#9a9a9a;left:1061.5px;">Accessories</div>
<div class="t" style="top:348px;font-size:8.3px;color:#444;right:251.20000000000005px;">$343K</div>
<div class="t" style="top:360px;font-size:7.9px;color:#5ea35e;right:251.20000000000005px;">+6.96 %</div>
<div class="t" style="top:369px;font-size:19.5px;color:#48954a;right:251.0px;letter-spacing:-0.6px;">+22.3K</div>
<div class="a" style="left:1207px;top:327.5px;width:145.5px;height:87.5px;background:#fff;border:1px solid #cfcfcf;box-shadow:1px 1px 2px rgba(0,0,0,0.2);"></div>
<div class="t" style="top:333px;font-size:12.1px;color:#3a3a3a;left:1216.5px;">HL Mountain Tire</div>
<div class="t" style="top:349px;font-size:8.2px;color:#9a9a9a;left:1216px;">Accessories</div>
<div class="t" style="top:348px;font-size:8.3px;color:#444;right:96.70000000000005px;">$110K</div>
<div class="t" style="top:360px;font-size:7.9px;color:#5ea35e;right:96.70000000000005px;">+4.15 %</div>
<div class="t" style="top:369px;font-size:19.5px;color:#48954a;right:96.5px;letter-spacing:-0.6px;">+4.38K</div>
<div class="a" style="left:1052.5px;top:423.5px;width:146px;height:87.5px;background:#fff;border:1px solid #cfcfcf;box-shadow:1px 1px 2px rgba(0,0,0,0.2);"></div>
<div class="t" style="top:429px;font-size:12.1px;color:#3a3a3a;left:1062.0px;">Hydration Pack</div>
<div class="t" style="top:445px;font-size:8.2px;color:#9a9a9a;left:1061.5px;">Accessories</div>
<div class="t" style="top:444px;font-size:8.3px;color:#444;right:251.20000000000005px;">$180K</div>
<div class="t" style="top:456px;font-size:7.9px;color:#5ea35e;right:251.20000000000005px;">+5.37 %</div>
<div class="t" style="top:465px;font-size:19.5px;color:#48954a;right:251.0px;letter-spacing:-0.6px;">+9.18K</div>
<div class="a" style="left:1207px;top:423.5px;width:145.5px;height:87.5px;background:#fff;border:1px solid #cfcfcf;box-shadow:1px 1px 2px rgba(0,0,0,0.2);"></div>
<div class="t" style="top:429px;font-size:12.1px;color:#3a3a3a;left:1216.5px;">LL Mountain Tire</div>
<div class="t" style="top:445px;font-size:8.2px;color:#9a9a9a;left:1216px;">Accessories</div>
<div class="t" style="top:444px;font-size:8.3px;color:#444;right:96.70000000000005px;">$81.1K</div>
<div class="t" style="top:456px;font-size:7.9px;color:#5ea35e;right:96.70000000000005px;">+6.63 %</div>
<div class="t" style="top:465px;font-size:19.5px;color:#48954a;right:96.5px;letter-spacing:-0.6px;">+5.05K</div>
<svg class="a" style="left:0;top:0" width="1440" height="905"><path d="M1063.5 383.8L1072.0 372.5L1080.5 383.8Z" fill="#2f7d32"/><polyline points="1063.75,404.75 1073.75,401 1083.75,399.75 1097.5,401 1110,399.4 1121.25,396.6 1132.5,397.25 1143.75,400 1155,398.1 1166.25,396.25 1177.5,397.25 1188.1,394.4" fill="none" stroke="#4a4a4a" stroke-width="1" stroke-linejoin="round"/><circle cx="1063.75" cy="404.75" r="1.8" fill="#f28c1e"/><circle cx="1188.1" cy="394.4" r="1.8" fill="#d0111b"/><path d="M1218 383.8L1226.5 372.5L1235 383.8Z" fill="#2f7d32"/><polyline points="1217.5,404.8 1229,400.8 1240.4,399.6 1250.8,399.1 1262.3,400.3 1273.75,396.1 1285.7,394.1 1296.7,397.2 1308.1,399.5 1319.6,398.75 1331,397.2 1342.3,396.1" fill="none" stroke="#4a4a4a" stroke-width="1" stroke-linejoin="round"/><circle cx="1217.5" cy="404.8" r="1.8" fill="#f28c1e"/><circle cx="1285.7" cy="394.1" r="1.8" fill="#d0111b"/><circle cx="1342.3" cy="396.1" r="1.8" fill="#222"/><path d="M1063.5 479.8L1072.0 468.5L1080.5 479.8Z" fill="#2f7d32"/><polyline points="1063.5,501.5 1075,497.3 1086.5,496.1 1097.9,495.4 1109.4,495.5 1121.9,495 1132.3,494.5 1143.2,491.6 1153.1,493.4 1164.6,493.5 1176.6,494.7 1188.5,490.5" fill="none" stroke="#4a4a4a" stroke-width="1" stroke-linejoin="round"/><circle cx="1063.5" cy="501.5" r="1.8" fill="#f28c1e"/><circle cx="1188.5" cy="490.5" r="1.8" fill="#d0111b"/><path d="M1218 479.8L1226.5 468.5L1235 479.8Z" fill="#2f7d32"/><polyline points="1217.5,501.5 1229,498.4 1240.4,497.3 1251.9,496.8 1262.3,496.1 1272.7,495.2 1284.7,495.5 1296.7,497.6 1308.1,493.5 1319.1,495.5 1330.8,490.9 1342.3,490.5" fill="none" stroke="#4a4a4a" stroke-width="1" stroke-linejoin="round"/><circle cx="1217.5" cy="501.5" r="1.8" fill="#f28c1e"/><circle cx="1330.8" cy="490.9" r="1.8" fill="#d0111b"/><circle cx="1342.3" cy="490.5" r="1.8" fill="#222"/></svg>
<div class="a" style="left:35px;top:786px;width:1366px;height:27px;background:#f5f5f5;border-top:1px solid #c6c6c6;"></div>
<svg class="a" style="left:61px;top:796px;" width="5" height="8" viewBox="0 0 5 8"><path d="M5 0V8L0 4Z" fill="#c3c3c3"/></svg>
<svg class="a" style="left:90px;top:796px;" width="5" height="8" viewBox="0 0 5 8"><path d="M0 0V8L5 4Z" fill="#c3c3c3"/></svg>
<div class="a" style="left:135px;top:786px;width:66px;height:26px;background:#fff;border-left:1px solid #c6c6c6;border-right:1px solid #c6c6c6;"></div>
<div class="a" style="left:136px;top:809px;width:64px;height:2px;background:#217346;"></div>
<div class="t" style="top:793px;font-size:13px;color:#217346;font-weight:bold;left:147.5px;letter-spacing:-0.45px;">Sheet1</div>
<div class="t" style="top:794px;font-size:12.8px;color:#444;left:213px;letter-spacing:-0.4px;">Sheet2</div>
<div class="t" style="top:794px;font-size:12.8px;color:#444;left:278px;letter-spacing:-0.4px;">Sheet3</div>
<div class="t" style="top:794px;font-size:12.8px;color:#444;left:343px;letter-spacing:-0.4px;">Sheet4</div>
<div class="t" style="top:794px;font-size:12.8px;color:#444;left:408px;letter-spacing:-0.4px;">Sheet5</div>
<div class="a" style="left:265px;top:791px;width:1px;height:18px;background:#c6c6c6;"></div>
<div class="a" style="left:330px;top:791px;width:1px;height:18px;background:#c6c6c6;"></div>
<div class="a" style="left:395.5px;top:791px;width:1px;height:18px;background:#c6c6c6;"></div>
<div class="a" style="left:459.5px;top:791px;width:1px;height:18px;background:#c6c6c6;"></div>
<svg class="a" style="left:492px;top:791px;" width="18" height="18" viewBox="0 0 18 18"><circle cx="9" cy="9" r="7.3" fill="none" stroke="#666" stroke-width="1.3"/><path d="M9 5V13M5 9H13" stroke="#666" stroke-width="1.5"/></svg>
<div class="a" style="left:854px;top:796px;width:1.6px;height:1.6px;background:#9a9a9a;"></div>
<div class="a" style="left:854px;top:800px;width:1.6px;height:1.6px;background:#9a9a9a;"></div>
<div class="a" style="left:854px;top:804px;width:1.6px;height:1.6px;background:#9a9a9a;"></div>
<div class="a" style="left:871px;top:793px;width:470px;height:15px;background:#fff;border:1px solid #ababab;"></div>
<div class="a" style="left:1341px;top:793px;width:24px;height:15px;background:#e6e6e6;"></div>
<div class="a" style="left:871px;top:793px;width:15px;height:15px;background:#fff;border:1px solid #ababab;"></div>
<svg class="a" style="left:875px;top:797px;" width="5" height="8" viewBox="0 0 5 8"><path d="M5 0V8L0 4Z" fill="#666"/></svg>
<div class="a" style="left:1365px;top:793px;width:15px;height:15px;background:#fff;border:1px solid #ababab;"></div>
<svg class="a" style="left:1370px;top:797px;" width="5" height="8" viewBox="0 0 5 8"><path d="M0 0V8L5 4Z" fill="#666"/></svg>
<div class="a" style="left:1380px;top:786px;width:21px;height:27px;background:#f3f3f3;"></div>
<div class="a" style="left:35px;top:813px;width:1366px;height:1px;background:#fff;"></div>
<div class="a" style="left:35px;top:814px;width:1366px;height:21px;background:#217346;"></div>
<div class="a" style="left:35px;top:835px;width:1366px;height:1px;background:#111;"></div>
<div class="a" style="left:35px;top:836px;width:1366px;height:1px;background:#f4f4f4;"></div>
<div class="t" style="top:820px;font-size:10.8px;color:#fff;left:42.5px;letter-spacing:-0.25px;">READY</div>
<svg class="a" style="left:95px;top:818px;" width="14" height="14" viewBox="0 0 14 14"><path d="M5 1.5H12.5V12.5H1.5V7" fill="none" stroke="#fff" stroke-width="1"/><rect x="6" y="1.5" width="6.5" height="1.8" fill="#fff"/><circle cx="3.2" cy="3.6" r="2.9" fill="#e8ece9"/><path d="M3.5 6.5H5M6.5 6.5H8M9.5 6.5H11M3.5 8.8H5M6.5 8.8H8M9.5 8.8H11M3.5 11H5M6.5 11H8M9.5 11H11" stroke="#fff" stroke-width="1.1"/></svg>
<div class="a" style="left:1109px;top:814px;width:38px;height:21px;background:#0f5d33;"></div>
<svg class="a" style="left:1121px;top:818px;" width="14" height="14" viewBox="0 0 14 14"><path d="M0.5 0.5H13.5V13.5H0.5ZM0.5 4.8H13.5M0.5 9.2H13.5M4.8 0.5V13.5M9.2 0.5V13.5" fill="none" stroke="#fff"/></svg>
<svg class="a" style="left:1159px;top:818px;" width="15" height="14" viewBox="0 0 15 14"><rect x="0.5" y="0.5" width="14" height="13" fill="none" stroke="#fff"/><rect x="3.5" y="3" width="8" height="8" fill="none" stroke="#fff"/><path d="M5 5H10M5 7H10M5 9H10" stroke="#fff" stroke-width="0.8"/></svg>
<svg class="a" style="left:1196px;top:818px;" width="15" height="14" viewBox="0 0 15 14"><rect x="0.5" y="0.5" width="14" height="13" fill="none" stroke="#fff"/><rect x="2.5" y="0.5" width="4" height="6" fill="#fff"/><rect x="8.5" y="0.5" width="4" height="6" fill="#fff"/></svg>
<div class="a" style="left:1228px;top:823.5px;width:6px;height:2px;background:#fff;"></div>
<div class="a" style="left:1238px;top:824px;width:100px;height:1px;background:#fff;"></div>
<div class="a" style="left:1286px;top:818px;width:4px;height:13px;background:#fff;"></div>
<svg class="a" style="left:1341px;top:819px;" width="10" height="10" viewBox="0 0 10 10"><path d="M5 0.5V9.5M0.5 5H9.5" stroke="#fff" stroke-width="2"/></svg>
<div class="t" style="top:819px;font-size:10.5px;color:#fff;left:1364.5px;">100%</div>
<div class="a" style="left:35px;top:837px;width:1366px;height:4px;background:#b9b7b6;"></div>
<div class="a" style="left:35px;top:837px;width:109px;height:4px;background:#fc6423;"></div>
<div class="a" style="left:35px;top:841px;width:1366px;height:33px;background:#e9e9e9;"></div>
<div class="a" style="left:49px;top:850px;width:4.5px;height:17px;background:#a3a3a3;"></div>
<div class="a" style="left:57.5px;top:850px;width:4.5px;height:17px;background:#a3a3a3;"></div>
<svg class="a" style="left:80px;top:849px;" width="19" height="19" viewBox="0 0 19 19"><path d="M4 4.5A7.5 7.5 0 1 0 9.5 2" fill="none" stroke="#a3a3a3" stroke-width="2.2"/><path d="M9 0L5 2.2L9 4.5Z" fill="#a3a3a3"/><text x="9.5" y="13" font-size="7.5" font-weight="bold" text-anchor="middle" fill="#a3a3a3" font-family="Liberation Sans">10</text></svg>
<svg class="a" style="left:114px;top:850px;" width="14" height="17" viewBox="0 0 14 17"><path d="M0 0H9L14 5V17H0Z" fill="#a3a3a3"/><path d="M3 7H11M3 10H11M3 13H11" stroke="#e9e9e9" stroke-width="1.2"/></svg>
<svg class="a" style="left:143px;top:850px;" width="21" height="17" viewBox="0 0 21 17"><path d="M0 5H5L11 0V17L5 12H0Z" fill="#a3a3a3"/><path d="M13.5 5.5Q15.5 8.5 13.5 11.5M16 3Q19.5 8.5 16 14" fill="none" stroke="#a3a3a3" stroke-width="1.6"/></svg>
<div class="a" style="left:179px;top:857px;width:92px;height:3px;background:#6bb1d6;"></div>
<div class="a" style="left:267px;top:852px;width:11px;height:12px;background:#d6d6d6;border:1px solid #8a8a8a;"></div>
<svg class="a" style="left:667px;top:844px;" width="26" height="28" viewBox="0 0 26 28"><g fill="none" stroke="#ababab" stroke-width="1">
<path d="M6.5 1.5H19.5L24 6V18.5L19.5 23H6.5L1.5 18.5V6Z"/>
<path d="M5 4.5H21M13 4.5V25.5M9.5 7.5V19.5H12M16.5 7.5H20.5V12.5H16.5V19.5H20M1.5 12.5H5.5V16M24 12.5H20.5"/>
<path d="M8 25.5H18"/></g>
<rect x="9" y="24.5" width="8.5" height="1.6" fill="#ababab"/></svg>
<div class="t" style="top:846px;font-size:20px;color:#bababa;left:697.5px;letter-spacing:-0.1px;">LaSkola</div>
<svg class="a" style="left:1278px;top:848px;" width="21" height="21" viewBox="0 0 21 21"><circle cx="10.5" cy="10.5" r="9" fill="none" stroke="#b8b8b8" stroke-width="2"/><path d="M10.5 4.5V10.5L14.5 13.5" fill="none" stroke="#b8b8b8" stroke-width="2"/></svg>
<div class="t" style="top:847px;font-size:19.5px;color:#b2b2b2;font-weight:bold;left:1307.5px;font-family:'Liberation Serif',serif;letter-spacing:0.3px;">10:57</div>
<svg class="a" style="left:1374px;top:850px;" width="18" height="17" viewBox="0 0 18 17"><path d="M1 7V1H7M11 1H17V7M17 10V16H11M7 16H1V10" fill="none" stroke="#a0a0a0" stroke-width="2"/></svg>
<svg class="a" style="left:0;top:0" width="1440" height="905">
<path d="M1261 762L1260 814H1334L1335 762Z" fill="#112a45"/>
<path d="M1297 786L1299 814H1334L1335 786Z" fill="#0d2137"/>
<path d="M1256 632Q1248 638 1246 660L1238.3 768L1255 775L1256 787L1262 789Q1278 783 1284 770Q1290 782 1304 788Q1320 789 1339.5 786L1341 776L1362 777L1371 706L1361 648Q1356 631 1345 627L1317.9 612.9L1279.7 614.6Z" fill="#12304f"/>
<path d="M1256 632L1279.7 614.6L1317.9 612.9L1345 627L1343 700L1339.5 785.5Q1320 789 1304 787.5Q1290 782 1284 768Q1278 783 1262 788L1255.5 785L1253 690Z" fill="#12304f"/>
<path d="M1256 632Q1248 638 1246 660L1238.3 768L1255 775L1255.5 700L1253 680Z" fill="#0f2946"/>
<path d="M1345 627Q1356 631 1361 648L1371 706L1362 777L1340.8 776L1341 745L1342 700Z" fill="#12304f"/>
<path d="M1340.5 712L1343 740L1341 752Z" fill="#fff" opacity="0.95"/>
<path d="M1284 680V768" stroke="#0b2036" stroke-width="0.8"/>
<path d="M1279.7 614.6L1284.5 612L1298 617.5L1314.5 610L1317.9 612.9L1305.4 634.5L1283 676L1281.4 637.8Z" fill="#f0f0f0"/>
<path d="M1283 640L1305 632L1296 655L1283 676Z" fill="#e4e4e4"/>
<path d="M1288.8 624.5L1298 621.2L1298.8 627.9L1293.8 632.8L1289.7 629.5Z" fill="#e4231d"/>
<path d="M1289.7 629.5L1293.8 632.8L1295.5 654.4L1283.5 676L1282.4 656Z" fill="#e4231d"/>
<path d="M1292 633L1294 653L1284 674Z" fill="#c81a15" opacity="0.6"/>
<path d="M1279.7 614.6L1268 628L1282 676Z" fill="#12304f"/>
<path d="M1317.9 612.9L1331 625L1284 678L1305.4 634.5Z" fill="#12304f"/>
<path d="M1268.5 632L1282.5 676M1324 622L1284 678" stroke="#0a1e33" stroke-width="0.9" fill="none"/>
<circle cx="1286.9" cy="696.2" r="2.5" fill="#0a1a2a"/><circle cx="1287.8" cy="717" r="2.5" fill="#0a1a2a"/><circle cx="1288.3" cy="737.3" r="2.5" fill="#0a1a2a"/>
<path d="M1239 771.4L1254.2 775L1254 779L1239 776Z" fill="#f2f2f2"/>
<path d="M1238 775L1253.5 777Q1255 790 1252 800Q1250 806 1246 811Q1240 806 1237 795Q1235 785 1238 775Z" fill="#f0c08b"/>
<path d="M1243 790Q1245 800 1247 806" stroke="#c48e5e" stroke-width="1" fill="none"/>
<path d="M1340.8 775.8L1356.7 780.2L1356 784L1340.5 780Z" fill="#e4e4e4"/><path d="M1340.5 776.5L1346 778.5L1345.5 780.5L1340.5 779Z" fill="#7a4a25"/><path d="M1346 778.5L1355.5 781L1355 783.5L1345.5 780.5Z" fill="#d8e6ea"/>
<path d="M1340 779L1357 783Q1360 795 1355 805Q1350 811 1345 812Q1342 805 1341 797Q1338 788 1340 779Z" fill="#f0c08b"/>
<path d="M1348 792Q1350 802 1347 810M1352 790Q1354 800 1351 808" stroke="#c48e5e" stroke-width="0.8" fill="none"/>
<path d="M1285 605.4L1311.6 601.9L1316 611L1300 619L1283.5 616Z" fill="#e6b27c"/>
<path d="M1275.8 568.3L1284.2 563.4L1295.7 561.7L1304.5 563.4L1309.8 570L1312.5 578.9L1316.9 577.1L1319.5 581.6L1318.7 589.5L1314.2 593L1311.6 601.9L1304.5 607.2L1293 610.7L1285 605.4L1279.8 594.8L1276.7 584.2Z" fill="#f0c38e"/>
<path d="M1304.5 563.4L1309.8 570L1312.5 578.9L1316.9 577.1L1319.5 581.6L1318.7 589.5L1314.2 593L1311.6 601.9L1304.5 607.2L1307.2 596.6L1304.5 584.2Z" fill="#ddaa75"/>
<path d="M1286.8 607.2Q1298 606 1308 603.2" fill="none" stroke="#c48a56" stroke-width="1.4"/>
<path d="M1274 569.2L1275.3 559.5L1280.6 552.4L1288.6 548.4L1297.4 547.5L1308 548.8L1315.1 555L1318.7 563L1318.2 571.8L1316 578.9L1311.6 579.8L1308 568.3L1301 562.1L1292.1 562.1L1283.3 563.9L1277.1 569.2L1275.3 575.4Z" fill="#6b4424"/>
<path d="M1281 556Q1290 551 1300 553Q1292 555 1285 559Z" fill="#8a5a33" opacity="0.8"/>
<path d="M1303 552Q1312 556 1315 566L1311 562Q1308 556 1303 552Z" fill="#84552f" opacity="0.8"/>
<path d="M1278 576.5L1286 575M1293 575L1304.5 576.5" stroke="#5a3a22" stroke-width="1.6"/>
<ellipse cx="1282.6" cy="579.8" rx="3" ry="1.3" fill="#fff"/><ellipse cx="1299.4" cy="579.3" rx="3.2" ry="1.3" fill="#fff"/>
<circle cx="1283" cy="579.8" r="1.35" fill="#3a2616"/><circle cx="1299.6" cy="579.3" r="1.35" fill="#3a2616"/>
<path d="M1286 590.6Q1289.5 592 1293 590.8" fill="none" stroke="#c48a56" stroke-width="1.2"/>
<path d="M1284 596.4Q1291 595 1298.5 596.2Q1293 602.5 1286 599.8Z" fill="#c27f68"/>
<path d="M1285 596.6Q1291 595.6 1297.5 596.6Q1291 598.8 1285 597.8Z" fill="#fff"/>
</svg>
</body></html>
